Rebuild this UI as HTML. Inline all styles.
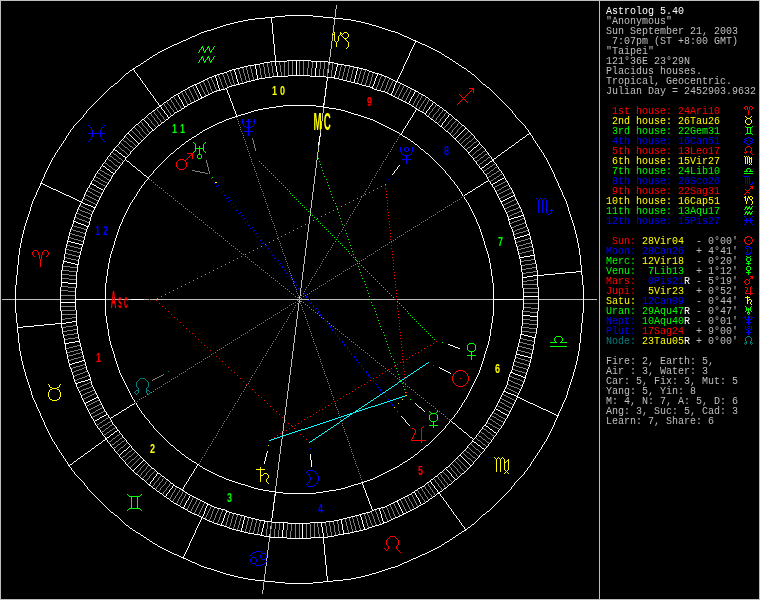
<!DOCTYPE html>
<html><head><meta charset="utf-8"><title>Astrolog 5.40</title>
<style>
html,body{margin:0;padding:0;background:#000;}
body{width:760px;height:600px;overflow:hidden;}
svg{display:block;will-change:transform}
body{position:relative}
pre.t{position:absolute;left:606px;margin:0;padding:0;font-family:"Liberation Mono",monospace;font-size:10px;line-height:10px;height:10px;white-space:pre}
.h{font-family:"Liberation Sans",sans-serif;font-size:12.6px;font-weight:bold;text-anchor:middle}
.g{font-family:"Liberation Sans",sans-serif;font-size:23.3px;font-weight:bold;text-anchor:middle}
</style></head><body>
<svg width="760" height="600" viewBox="0 0 760 600">
<rect width="760" height="600" fill="#000"/>
<g fill="none" stroke-width="1" shape-rendering="crispEdges">
<path stroke="#007f7f" d="M747 336.5h3M746 337.5h1M750 337.5h1M745.5 338v3M751.5 338v3M746.5 341v3M750.5 341v3M745 342.5h1M751 342.5h1M744 343.5h1M752 343.5h1M745 344.5h1M751 344.5h1M168 371.5h1M140 378.5h5M139 379.5h1M145 379.5h1M138 380.5h1M146 380.5h1M137 381.5h1M147 381.5h1M136.5 382v5M148.5 382v5M137 387.5h1M147 387.5h1M138.5 388v5M146.5 388v5M136 390.5h2M147 390.5h2M135 391.5h1M149 391.5h1M134 392.5h1M150 392.5h1M135 393.5h1M137 393.5h1M147 393.5h1M149 393.5h1M136 394.5h1M148 394.5h1"/>
<path stroke="#bfbfbf" d="M0 0.5h760M0.5 1v599M599.5 1v599M759.5 1v599M336.5 5v4M335.5 9v8M334 17.5h1M334.5 19v6M333.5 25v8M332 33.5h1M332.5 35v6M331.5 41v8M330.5 49v8M329.5 57v5M329.5 63v2M328.5 69v4M326 88.5h1M325 96.5h1M324.5 103v2M323.5 108v5M322.5 113v8M321.5 121v8M320.5 129v4M320 136.5h1M319.5 142v3M318.5 146v5M317.5 152v8M316.5 160v8M315.5 168v8M314.5 176v8M313.5 184v8M312.5 192v8M311.5 200v8M310.5 208v5M310.5 214v2M309.5 216v6M309 223.5h1M308.5 224v8M307.5 232v8M306.5 240v8M305.5 248v8M304.5 256v8M303.5 264v8M302.5 272v8M301.5 280v8M300.5 288v8M299.5 296v3M2 299.5h13M16 299.5h44M106 299.5h25M144 299.5h5M150 299.5h149M300 299.5h9M310 299.5h60M371 299.5h24M397 299.5h96M539 299.5h44M584 299.5h13M299.5 300v3M298.5 303v8M297.5 311v8M296.5 319v8M295.5 327v8M294.5 335v8M293.5 343v8M292.5 351v8M291.5 359v8M290.5 367v8M289.5 375v8M288.5 383v8M287.5 391v8M286.5 399v8M285.5 407v8M284.5 415v8M283.5 423v8M282.5 431v5M282.5 437v2M281.5 439v7M280.5 446v8M279.5 454v8M278.5 462v8M277.5 470v8M276.5 478v8M275.5 486v5M274.5 494v2M273 502.5h1M272 510.5h1M270.5 526v3M269.5 534v2M269.5 537v5M268.5 542v8M267.5 550v8M266.5 558v3M266.5 562v4M265.5 566v8M264.5 574v6M264 581.5h1M263.5 582v8M262.5 590v4M1 599.5h598M600 599.5h159"/>
<path stroke="#7f7f7f" d="M288.5 61v14M292.5 61v14M299.5 61v14M303.5 61v14M308.5 61v7M271.5 62v4M279.5 62v3M284.5 62v14M312.5 62v6M320.5 62v7M324.5 62v7M267.5 63v4M328.5 63v6M332.5 63v7M263.5 64v3M259.5 65v3M280.5 65v7M341.5 65v2M250.5 66v3M272.5 66v7M345.5 66v2M349.5 66v3M246.5 67v3M264.5 67v7M268.5 67v6M340.5 67v4M353.5 67v3M242 68.5h1M260.5 68v7M307.5 68v7M311.5 68v8M344.5 68v4M238.5 69v2M243.5 69v4M251.5 69v4M319.5 69v7M323.5 69v7M327.5 69v8M348.5 69v4M361.5 69v2M247.5 70v4M331.5 70v7M352.5 70v4M365.5 70v2M230.5 71v2M239.5 71v3M339.5 71v5M360.5 71v3M281.5 72v4M343.5 72v4M364.5 72v3M369 72.5h1M226 73.5h1M231.5 73v3M244.5 73v3M252.5 73v4M269.5 73v4M273.5 73v3M347.5 73v4M368.5 73v3M373 73.5h1M222 74.5h1M227.5 74v2M240.5 74v4M248.5 74v4M265.5 74v3M351.5 74v4M359.5 74v4M372.5 74v3M218.5 75v2M223.5 75v2M261.5 75v3M363.5 75v4M381.5 75v2M228.5 76v3M232.5 76v4M245.5 76v4M338.5 76v2M342.5 76v3M367.5 76v4M219.5 77v2M224.5 77v3M253.5 77v3M346.5 77v3M371.5 77v4M380.5 77v2M385.5 77v2M211.5 78v2M241.5 78v3M249.5 78v3M350.5 78v3M358.5 78v3M207.5 79v2M220.5 79v3M229.5 79v3M362.5 79v3M379.5 79v3M384.5 79v2M389 79.5h1M212.5 80v2M225.5 80v3M233.5 80v3M246.5 80v2M366.5 80v3M388.5 80v2M203.5 81v2M208.5 81v2M242.5 81v2M357.5 81v2M370.5 81v3M383.5 81v2M392.5 81v2M213.5 82v2M221.5 82v3M230.5 82v2M361.5 82v2M378.5 82v3M387.5 82v3M199 83.5h1M204.5 83v2M209.5 83v3M226.5 83v2M234.5 83v2M365.5 83v2M382.5 83v3M391.5 83v2M200.5 84v2M214.5 84v3M231.5 84v2M369.5 84v2M400 84.5h1M205.5 85v2M222.5 85v2M227.5 85v2M377.5 85v2M386.5 85v3M390.5 85v2M399.5 85v2M192 86.5h1M201.5 86v2M210.5 86v3M381.5 86v2M403.5 86v2M193.5 87v2M206.5 87v3M215.5 87v2M223.5 87v2M376.5 87v2M389.5 87v2M398.5 87v2M188 88.5h1M202.5 88v2M380.5 88v2M385.5 88v2M402.5 88v2M407.5 88v2M189.5 89v2M194.5 89v2M211.5 89v2M216.5 89v2M388.5 89v2M397.5 89v2M411 89.5h1M203.5 90v2M207.5 90v2M384 90.5h1M401.5 90v2M406.5 90v2M410.5 90v2M185.5 91v2M190.5 91v2M195.5 91v2M212 91.5h1M387.5 91v2M396.5 91v2M181 92.5h1M204.5 92v2M208.5 92v2M400.5 92v2M405 92.5h1M409.5 92v2M182.5 93v2M186.5 93v2M191.5 93v2M196.5 93v2M395.5 93v2M404.5 93v2M205.5 94v2M399.5 94v2M408.5 94v2M418.5 94v2M183.5 95v2M187 95.5h1M192.5 95v2M197.5 95v2M394 95.5h1M403.5 95v2M422 95.5h1M188.5 96v2M398.5 96v2M407.5 96v2M417.5 96v2M421.5 96v2M174.5 97v2M184.5 97v2M193.5 97v2M198.5 97v2M402.5 97v2M189.5 98v2M406.5 98v2M416 98.5h1M420.5 98v2M425.5 98v2M170 99.5h1M175 99.5h1M185.5 99v2M194.5 99v2M401 99.5h1M415.5 99v2M171.5 100v2M176.5 100v2M190.5 100v2M405.5 100v2M419 100.5h1M424 100.5h1M428.5 100v2M186.5 101v2M414.5 101v2M418.5 101v2M423.5 101v2M167.5 102v2M172 102.5h1M177 102.5h1M191 102.5h1M427.5 102v2M173.5 103v2M178.5 103v2M187.5 103v2M413.5 103v2M417.5 103v2M422 103.5h1M164.5 104v2M168 104.5h1M421.5 104v2M426 104.5h1M169 105.5h1M174.5 105v2M179 105.5h1M412 105.5h1M416.5 105v2M425.5 105v2M435.5 105v2M165 106.5h1M170.5 106v2M180.5 106v2M420 106.5h1M166.5 107v2M175 107.5h1M415 107.5h1M419.5 107v2M424.5 107v2M434 107.5h1M171 108.5h1M176.5 108v2M181 108.5h1M433 108.5h1M439 108.5h1M157.5 109v2M167 109.5h1M172 109.5h1M418 109.5h1M423.5 109v2M432.5 109v2M438.5 109v2M168.5 110v2M173.5 110v2M177 110.5h1M442.5 110v2M153 111.5h1M158 111.5h1M422 111.5h1M431 111.5h1M437 111.5h1M154.5 112v2M159 112.5h1M169 112.5h1M174 112.5h1M430 112.5h1M436 112.5h1M441 112.5h1M446 112.5h1M160.5 113v2M170.5 113v2M429.5 113v2M435 113.5h1M440 113.5h1M445 113.5h1M151.5 114v2M155 114.5h1M434 114.5h1M439.5 114v2M444.5 114v2M156 115.5h1M161 115.5h1M428 115.5h1M433.5 115v2M152 116.5h1M157.5 116v2M162 116.5h1M438 116.5h1M443 116.5h1M147 117.5h1M153 117.5h1M163.5 117v2M236 117.5h1M432 117.5h1M437 117.5h1M442 117.5h1M148 118.5h1M154.5 118v2M158 118.5h1M431 118.5h1M436.5 118v2M441 118.5h1M452 118.5h1M149 119.5h1M159 119.5h1M164 119.5h1M237 119.5h1M440.5 119v2M451 119.5h1M150 120.5h1M155 120.5h1M160.5 120v2M435 120.5h1M450 120.5h1M456 120.5h1M151.5 121v2M156 121.5h1M238 121.5h1M439 121.5h1M449 121.5h1M455 121.5h1M141 122.5h1M157.5 122v2M161 122.5h1M438 122.5h1M448.5 122v2M454 122.5h1M142.5 123v2M152 123.5h1M238 123.5h1M453 123.5h1M458 123.5h1M153 124.5h1M158 124.5h1M447 124.5h1M452 124.5h1M457.5 124v2M138 125.5h1M143 125.5h1M154 125.5h1M239 125.5h1M446 125.5h1M451.5 125v2M139 126.5h1M144 126.5h1M155 126.5h1M445 126.5h1M456 126.5h1M461 126.5h1M134 127.5h1M140 127.5h1M145 127.5h1M240 127.5h1M444 127.5h1M450 127.5h1M455 127.5h1M460 127.5h1M135 128.5h1M141 128.5h1M146 128.5h1M449 128.5h1M454 128.5h1M459 128.5h1M136 129.5h1M142.5 129v2M147.5 129v2M240 129.5h1M448 129.5h1M453 129.5h1M458 129.5h1M131 130.5h1M137 130.5h1M447 130.5h1M452.5 130v2M457.5 130v2M132 131.5h1M138 131.5h1M143 131.5h1M148 131.5h1M241 131.5h1M468 131.5h1M133 132.5h1M139.5 132v2M144 132.5h1M149 132.5h1M451 132.5h1M456 132.5h1M467 132.5h1M134 133.5h1M145 133.5h1M242 133.5h1M450 133.5h1M455 133.5h1M466 133.5h1M135 134.5h1M140 134.5h1M146 134.5h1M454 134.5h1M465 134.5h1M471 134.5h1M136 135.5h1M141 135.5h1M243 135.5h1M399 135.5h1M453 135.5h1M464 135.5h1M470 135.5h1M125 136.5h1M137 136.5h1M142 136.5h1M463 136.5h1M469 136.5h1M126 137.5h1M138 137.5h1M143 137.5h1M243 137.5h1M398 137.5h1M462 137.5h1M468 137.5h1M127 138.5h1M139 138.5h1M252.5 138v2M461 138.5h1M466 138.5h2M473 138.5h1M128 139.5h1M140 139.5h1M244 139.5h1M397 139.5h1M460 139.5h1M465 139.5h1M472 139.5h1M123 140.5h1M129 140.5h1M141 140.5h1M253.5 140v4M459 140.5h1M464 140.5h1M471 140.5h1M124 141.5h2M130 141.5h2M245 141.5h1M396 141.5h1M458 141.5h1M463 141.5h1M469 141.5h2M476 141.5h1M120 142.5h1M126 142.5h1M132 142.5h1M462 142.5h1M468 142.5h1M474 142.5h2M121 143.5h1M127 143.5h1M133 143.5h1M245 143.5h1M394 143.5h1M461 143.5h1M467 143.5h1M473 143.5h1M122 144.5h1M128 144.5h1M134 144.5h1M254.5 144v4M466 144.5h1M472 144.5h1M123 145.5h1M129 145.5h1M135 145.5h1M246 145.5h1M393 145.5h1M465 145.5h1M471 145.5h1M118 146.5h1M124 146.5h1M130 146.5h2M464 146.5h1M470 146.5h1M119 147.5h1M125 147.5h2M132 147.5h1M247 147.5h1M392 147.5h1M468 147.5h2M481 147.5h1M120 148.5h1M127 148.5h1M133 148.5h1M255.5 148v3M467 148.5h1M480 148.5h1M121 149.5h1M128 149.5h1M247 149.5h1M391 149.5h1M466 149.5h1M479 149.5h1M122 150.5h2M129 150.5h1M477 150.5h2M124 151.5h1M130 151.5h1M248 151.5h1M390 151.5h1M476 151.5h1M483 151.5h2M112 152.5h1M125 152.5h1M475 152.5h1M482 152.5h1M113 153.5h1M126 153.5h1M249 153.5h1M388 153.5h1M474 153.5h1M481 153.5h1M487 153.5h1M114 154.5h2M127 154.5h1M473 154.5h1M479 154.5h2M485 154.5h2M116 155.5h1M249 155.5h1M387 155.5h1M472 155.5h1M478 155.5h1M484 155.5h1M110 156.5h2M117 156.5h1M477 156.5h1M483 156.5h1M112 157.5h1M118 157.5h1M250 157.5h1M386 157.5h1M475 157.5h2M481 157.5h2M488 157.5h2M113 158.5h1M119 158.5h2M474 158.5h1M480 158.5h1M487 158.5h1M108 159.5h1M114 159.5h2M121 159.5h1M251 159.5h1M385 159.5h1M479 159.5h1M486 159.5h1M109 160.5h2M116 160.5h1M122 160.5h1M206.5 160v3M477 160.5h2M484 160.5h2M111 161.5h1M117 161.5h1M251 161.5h1M383 161.5h1M476 161.5h1M483 161.5h1M112 162.5h1M118 162.5h2M482 162.5h1M105 163.5h2M113 163.5h1M120 163.5h1M207.5 163v4M252 163.5h1M382 163.5h1M480 163.5h2M107 164.5h1M114 164.5h1M479 164.5h1M493 164.5h2M108 165.5h1M115 165.5h2M253 165.5h1M381 165.5h1M492 165.5h1M109 166.5h2M117 166.5h1M490 166.5h2M111 167.5h1M118 167.5h1M208.5 167v4M254 167.5h1M380 167.5h1M489 167.5h1M495 167.5h2M112 168.5h1M487 168.5h2M494 168.5h1M113 169.5h2M254 169.5h1M379 169.5h1M486 169.5h1M493 169.5h1M100 170.5h2M115 170.5h1M192 170.5h3M484 170.5h2M491 170.5h2M499 170.5h1M102 171.5h2M195 171.5h5M209.5 171v3M255 171.5h1M377 171.5h1M490 171.5h1M497 171.5h2M104 172.5h1M200 172.5h5M489 172.5h1M496 172.5h1M98 173.5h2M105 173.5h2M205 173.5h3M256 173.5h1M376 173.5h1M487 173.5h2M494 173.5h2M100 174.5h1M107 174.5h2M486 174.5h1M492 174.5h2M500 174.5h2M101 175.5h2M109 175.5h2M256 175.5h1M375 175.5h1M491 175.5h1M499 175.5h1M95 176.5h1M103 176.5h1M111 176.5h1M489 176.5h2M497 176.5h2M96 177.5h2M104 177.5h2M257 177.5h1M374 177.5h1M488 177.5h1M496 177.5h1M98 178.5h2M106 178.5h1M494 178.5h2M100 179.5h1M107 179.5h2M149 179.5h1M258 179.5h1M372 179.5h1M493 179.5h1M94 180.5h2M101 180.5h2M109 180.5h1M151 180.5h1M491 180.5h2M96 181.5h2M103 181.5h2M258 181.5h1M371 181.5h1M490 181.5h1M505 181.5h2M98 182.5h1M105 182.5h2M153 182.5h1M503 182.5h2M99 183.5h2M107 183.5h1M259 183.5h1M370 183.5h1M501 183.5h2M101 184.5h2M155 184.5h1M499 184.5h2M103 185.5h2M157 185.5h1M260 185.5h1M369 185.5h1M497 185.5h2M506 185.5h2M105 186.5h1M495 186.5h2M504 186.5h2M89 187.5h1M159 187.5h1M260 187.5h1M368 187.5h1M494 187.5h1M502 187.5h2M90 188.5h2M161 188.5h1M501 188.5h1M509 188.5h2M92 189.5h2M261 189.5h1M366 189.5h1M499 189.5h2M507 189.5h2M87 190.5h1M94 190.5h2M163 190.5h1M497 190.5h2M505 190.5h2M88 191.5h2M96 191.5h2M262 191.5h1M365 191.5h1M496 191.5h1M503 191.5h2M90 192.5h2M98 192.5h2M165 192.5h1M501 192.5h2M511 192.5h2M92 193.5h1M100 193.5h2M167 193.5h1M263 193.5h1M364 193.5h1M499 193.5h2M509 193.5h2M85 194.5h1M93 194.5h2M498 194.5h1M507 194.5h2M86 195.5h2M95 195.5h2M169 195.5h1M263 195.5h1M363 195.5h1M505 195.5h2M88 196.5h2M97 196.5h2M171 196.5h1M463 196.5h1M503 196.5h2M90 197.5h2M99 197.5h1M264 197.5h1M361 197.5h1M461 197.5h1M501 197.5h2M84 198.5h1M92 198.5h2M173 198.5h1M500 198.5h1M85 199.5h2M94 199.5h2M265 199.5h1M360 199.5h1M459 199.5h1M514 199.5h2M87 200.5h2M96 200.5h2M175 200.5h1M457 200.5h1M512 200.5h2M89 201.5h2M177 201.5h1M265 201.5h1M359 201.5h1M455 201.5h1M510 201.5h2M91 202.5h2M453 202.5h1M508 202.5h2M93 203.5h2M179 203.5h1M266 203.5h1M358 203.5h1M506 203.5h2M516 203.5h2M95 204.5h1M181 204.5h1M451 204.5h1M504 204.5h2M514 204.5h2M80 205.5h1M267 205.5h1M357 205.5h1M449 205.5h1M503 205.5h1M511 205.5h3M81 206.5h2M183 206.5h1M447 206.5h1M509 206.5h2M83 207.5h2M267 207.5h1M355 207.5h1M445 207.5h1M507 207.5h2M518 207.5h2M85 208.5h2M185 208.5h1M505 208.5h2M516 208.5h2M78 209.5h2M87 209.5h2M187 209.5h1M268 209.5h1M354 209.5h1M443 209.5h1M513 209.5h3M80 210.5h2M89 210.5h2M441 210.5h1M510 210.5h3M82 211.5h3M91 211.5h2M189 211.5h1M269 211.5h1M353 211.5h1M439 211.5h1M508 211.5h2M519 211.5h2M85 212.5h3M191 212.5h1M437 212.5h1M507 212.5h1M517 212.5h2M77 213.5h2M88 213.5h2M269 213.5h1M352 213.5h1M514 213.5h3M79 214.5h2M90 214.5h1M193 214.5h1M435 214.5h1M512 214.5h2M81 215.5h2M270 215.5h1M350 215.5h1M433 215.5h1M510 215.5h2M83 216.5h3M195 216.5h1M431 216.5h1M508 216.5h2M75 217.5h2M86 217.5h2M197 217.5h1M271 217.5h1M349 217.5h1M429 217.5h1M77 218.5h2M88 218.5h2M522 218.5h2M79 219.5h3M199 219.5h1M271 219.5h1M348 219.5h1M427 219.5h1M520 219.5h2M82 220.5h3M201 220.5h1M425 220.5h1M517 220.5h3M85 221.5h2M272 221.5h1M347 221.5h1M423 221.5h1M514 221.5h3M87 222.5h2M203 222.5h1M421 222.5h1M512 222.5h2M524 222.5h1M273 223.5h1M346 223.5h1M510 223.5h2M522 223.5h2M205 224.5h1M419 224.5h1M519 224.5h3M73 225.5h1M207 225.5h1M274 225.5h1M344 225.5h1M417 225.5h1M516 225.5h3M74 226.5h3M415 226.5h1M514 226.5h2M525 226.5h1M77 227.5h4M209 227.5h1M274 227.5h1M413 227.5h1M512 227.5h2M523 227.5h2M81 228.5h3M211 228.5h1M520 228.5h3M71 229.5h2M84 229.5h2M275 229.5h1M342 229.5h1M411 229.5h1M517 229.5h3M73 230.5h3M213 230.5h1M409 230.5h1M515 230.5h2M526 230.5h2M76 231.5h4M276 231.5h1M341 231.5h1M407 231.5h1M513 231.5h2M523 231.5h3M80 232.5h3M215 232.5h1M405 232.5h1M519 232.5h4M70 233.5h2M83 233.5h2M217 233.5h1M276 233.5h1M339 233.5h1M516 233.5h3M72 234.5h3M403 234.5h1M514 234.5h2M75 235.5h4M219 235.5h1M277 235.5h1M338 235.5h1M401 235.5h1M79 236.5h3M221 236.5h1M399 236.5h1M69 237.5h2M82 237.5h2M278 237.5h1M337 237.5h1M397 237.5h1M71 238.5h3M223 238.5h1M528 238.5h2M74 239.5h4M278 239.5h1M395 239.5h1M525 239.5h3M78 240.5h3M225 240.5h1M393 240.5h1M521 240.5h4M81 241.5h2M227 241.5h1M279 241.5h1M335 241.5h1M391 241.5h1M518 241.5h3M389 242.5h1M516 242.5h2M530 242.5h1M229 243.5h1M280 243.5h1M333 243.5h1M526 243.5h4M387 244.5h1M523 244.5h3M67 245.5h3M231 245.5h1M280 245.5h1M332 245.5h1M385 245.5h1M519 245.5h4M70 246.5h4M233 246.5h1M383 246.5h1M517 246.5h2M529 246.5h3M74 247.5h4M281 247.5h1M331 247.5h1M381 247.5h1M525 247.5h4M78 248.5h3M235 248.5h1M521 248.5h4M66 249.5h3M237 249.5h1M282 249.5h1M330 249.5h1M379 249.5h1M518 249.5h3M69 250.5h4M377 250.5h1M530 250.5h3M73 251.5h4M239 251.5h1M282 251.5h1M328 251.5h1M375 251.5h1M526 251.5h4M77 252.5h3M522 252.5h4M66 253.5h2M241 253.5h1M283 253.5h1M327 253.5h1M373 253.5h1M519 253.5h3M68 254.5h4M243 254.5h1M371 254.5h1M72 255.5h4M284 255.5h1M326 255.5h1M369 255.5h1M76 256.5h3M245 256.5h1M367 256.5h1M65 257.5h2M247 257.5h1M285 257.5h1M325 257.5h1M67 258.5h4M365 258.5h1M71 259.5h5M249 259.5h1M285 259.5h1M323 259.5h1M363 259.5h1M531 259.5h3M76 260.5h2M361 260.5h1M524 260.5h7M251 261.5h1M286 261.5h1M322 261.5h1M359 261.5h1M521 261.5h3M253 262.5h1M287 263.5h1M321 263.5h1M532 263.5h3M255 264.5h1M355 264.5h1M525 264.5h7M257 265.5h1M287 265.5h1M320 265.5h1M353 265.5h1M522 265.5h3M63 266.5h7M351 266.5h1M70 267.5h7M259 267.5h1M288 267.5h1M319 267.5h1M532 267.5h4M349 268.5h1M526 268.5h6M261 269.5h1M289 269.5h1M317 269.5h1M347 269.5h1M522 269.5h4M62 270.5h7M263 270.5h1M345 270.5h1M69 271.5h8M289 271.5h1M316 271.5h1M343 271.5h1M533 271.5h4M265 272.5h1M526 272.5h7M267 273.5h1M290 273.5h1M315 273.5h1M341 273.5h1M523 273.5h3M62 274.5h7M339 274.5h1M69 275.5h7M269 275.5h1M291 275.5h1M314 275.5h1M337 275.5h1M335 276.5h1M271 277.5h1M291 277.5h1M312 277.5h1M62 278.5h7M273 278.5h1M333 278.5h1M69 279.5h7M292 279.5h1M311 279.5h1M331 279.5h1M534 279.5h3M275 280.5h1M329 280.5h1M527 280.5h7M277 281.5h1M293 281.5h1M310 281.5h1M327 281.5h1M523 281.5h4M279 283.5h1M293 283.5h1M309 283.5h1M325 283.5h1M323 284.5h1M523 284.5h14M281 285.5h1M294 285.5h1M308 285.5h1M321 285.5h1M62 286.5h6M283 286.5h1M319 286.5h1M68 287.5h8M295 287.5h1M306 287.5h1M285 288.5h1M317 288.5h1M524 288.5h14M287 289.5h1M296 289.5h1M305 289.5h1M315 289.5h1M61 290.5h7M313 290.5h1M68 291.5h7M289 291.5h1M296 291.5h1M304 291.5h1M311 291.5h1M524 292.5h14M291 293.5h1M297 293.5h1M303 293.5h1M309 293.5h1M293 294.5h1M307 294.5h1M61 295.5h14M298 295.5h1M301 295.5h1M305 295.5h1M295 296.5h1M303 296.5h1M297 297.5h2M300 297.5h1M301 298.5h1M61 299.5h14M299 299.5h1M524 299.5h14M297 300.5h1M298 301.5h1M300 301.5h2M295 302.5h1M303 302.5h1M293 303.5h1M297 303.5h1M300 303.5h1M524 303.5h14M291 304.5h1M305 304.5h1M289 305.5h1M295 305.5h1M301 305.5h1M307 305.5h1M61 306.5h14M287 307.5h1M294 307.5h1M302 307.5h1M309 307.5h1M524 307.5h7M285 308.5h1M531 308.5h7M283 309.5h1M293 309.5h1M302 309.5h1M311 309.5h1M61 310.5h14M281 310.5h1M313 310.5h1M292 311.5h1M303 311.5h1M523 311.5h7M279 312.5h1M315 312.5h1M530 312.5h7M277 313.5h1M290 313.5h1M304 313.5h1M317 313.5h1M62 314.5h14M275 314.5h1M273 315.5h1M289 315.5h1M305 315.5h1M319 315.5h1M72 317.5h4M271 317.5h1M288 317.5h1M305 317.5h1M321 317.5h1M65 318.5h7M269 318.5h1M323 318.5h1M62 319.5h3M267 319.5h1M287 319.5h1M306 319.5h1M523 319.5h7M265 320.5h1M530 320.5h7M286 321.5h1M307 321.5h1M327 321.5h1M263 322.5h1M261 323.5h1M284 323.5h1M307 323.5h1M329 323.5h1M523 323.5h6M259 324.5h1M529 324.5h8M73 325.5h3M257 325.5h1M283 325.5h1M308 325.5h1M331 325.5h1M66 326.5h7M333 326.5h1M62 327.5h4M255 327.5h1M282 327.5h1M309 327.5h1M522 327.5h7M253 328.5h1M335 328.5h1M529 328.5h7M73 329.5h4M251 329.5h1M281 329.5h1M309 329.5h1M337 329.5h1M67 330.5h6M249 330.5h1M63 331.5h4M279 331.5h1M310 331.5h1M339 331.5h1M522 331.5h7M247 332.5h1M529 332.5h7M74 333.5h3M245 333.5h1M278 333.5h1M311 333.5h1M341 333.5h1M67 334.5h7M243 334.5h1M343 334.5h1M64 335.5h3M241 335.5h1M277 335.5h1M311 335.5h1M345 336.5h1M75 337.5h3M239 337.5h1M276 337.5h1M312 337.5h1M347 337.5h1M68 338.5h7M237 338.5h1M521 338.5h2M65 339.5h3M235 339.5h1M275 339.5h1M313 339.5h1M349 339.5h1M523 339.5h4M233 340.5h1M527 340.5h5M273 341.5h1M313 341.5h1M351 341.5h1M532 341.5h2M231 342.5h1M353 342.5h1M520 342.5h3M229 343.5h1M272 343.5h1M314 343.5h1M523 343.5h4M227 344.5h1M355 344.5h1M527 344.5h4M77 345.5h3M225 345.5h1M271 345.5h1M315 345.5h1M357 345.5h1M531 345.5h2M73 346.5h4M519 346.5h3M69 347.5h4M223 347.5h1M270 347.5h1M316 347.5h1M359 347.5h1M522 347.5h4M66 348.5h3M221 348.5h1M526 348.5h4M78 349.5h3M219 349.5h1M268 349.5h1M316 349.5h1M361 349.5h1M530 349.5h3M74 350.5h4M217 350.5h1M363 350.5h1M518 350.5h3M70 351.5h4M267 351.5h1M317 351.5h1M521 351.5h4M67 352.5h3M80 352.5h2M215 352.5h1M365 352.5h1M525 352.5h4M76 353.5h4M266 353.5h1M318 353.5h1M367 353.5h1M529 353.5h3M73 354.5h3M211 354.5h1M69 355.5h4M265 355.5h1M318 355.5h1M369 355.5h1M68 356.5h1M81 356.5h2M209 356.5h1M78 357.5h3M207 357.5h1M263 357.5h1M319 357.5h1M371 357.5h1M516 357.5h2M74 358.5h4M205 358.5h1M373 358.5h1M518 358.5h3M71 359.5h3M203 359.5h1M262 359.5h1M320 359.5h1M521 359.5h4M69 360.5h2M375 360.5h1M525 360.5h3M201 361.5h1M261 361.5h1M320 361.5h1M515 361.5h2M528 361.5h2M199 362.5h1M377 362.5h1M517 362.5h3M197 363.5h1M260 363.5h1M321 363.5h1M379 363.5h1M520 363.5h4M83 364.5h2M195 364.5h1M524 364.5h3M80 365.5h3M259 365.5h1M322 365.5h1M381 365.5h1M514 365.5h2M527 365.5h2M76 366.5h4M193 366.5h1M383 366.5h1M516 366.5h3M73 367.5h3M84 367.5h2M191 367.5h1M257 367.5h1M322 367.5h1M519 367.5h4M71 368.5h2M82 368.5h2M189 368.5h1M385 368.5h1M523 368.5h3M79 369.5h3M187 369.5h1M256 369.5h1M323 369.5h1M513 369.5h2M526 369.5h1M76 370.5h3M387 370.5h1M515 370.5h3M74 371.5h2M85 371.5h2M185 371.5h1M255 371.5h1M324 371.5h1M389 371.5h1M518 371.5h4M73 372.5h1M83 372.5h2M183 372.5h1M522 372.5h3M80 373.5h3M181 373.5h1M254 373.5h1M324 373.5h1M391 373.5h1M525 373.5h1M77 374.5h3M163 374.5h1M179 374.5h1M393 374.5h1M75 375.5h2M87 375.5h2M161 375.5h2M252 375.5h1M325 375.5h1M74 376.5h1M85 376.5h2M159 376.5h2M177 376.5h1M395 376.5h1M510 376.5h2M82 377.5h3M157 377.5h2M175 377.5h1M251 377.5h1M326 377.5h1M512 377.5h2M79 378.5h3M155 378.5h2M173 378.5h1M397 378.5h1M514 378.5h3M77 379.5h2M153 379.5h2M171 379.5h1M250 379.5h1M327 379.5h1M399 379.5h1M517 379.5h3M75 380.5h2M152 380.5h1M509 380.5h2M520 380.5h2M169 381.5h1M249 381.5h1M327 381.5h1M401 381.5h1M511 381.5h2M522 381.5h2M89 382.5h2M167 382.5h1M403 382.5h1M513 382.5h2M87 383.5h2M165 383.5h1M248 383.5h1M328 383.5h1M515 383.5h3M84 384.5h3M163 384.5h1M405 384.5h1M508 384.5h1M518 384.5h2M82 385.5h2M246 385.5h1M329 385.5h1M509 385.5h2M520 385.5h2M80 386.5h2M91 386.5h1M161 386.5h1M407 386.5h1M511 386.5h3M78 387.5h2M89 387.5h2M159 387.5h1M245 387.5h1M329 387.5h1M409 387.5h1M506 387.5h1M514 387.5h3M86 388.5h3M157 388.5h1M507 388.5h2M517 388.5h2M83 389.5h3M155 389.5h1M244 389.5h1M330 389.5h1M411 389.5h1M509 389.5h2M519 389.5h1M81 390.5h2M92 390.5h2M413 390.5h1M511 390.5h2M80 391.5h1M90 391.5h2M153 391.5h1M243 391.5h1M331 391.5h1M513 391.5h2M87 392.5h3M151 392.5h1M415 392.5h1M515 392.5h2M85 393.5h2M94 393.5h2M241 393.5h1M331 393.5h1M517 393.5h1M83 394.5h2M92 394.5h2M147 394.5h1M417 394.5h1M503 394.5h1M82 395.5h1M90 395.5h2M240 395.5h1M332 395.5h1M419 395.5h1M504 395.5h2M88 396.5h2M145 396.5h1M506 396.5h2M86 397.5h2M143 397.5h1M239 397.5h1M333 397.5h1M421 397.5h1M508 397.5h2M84 398.5h2M141 398.5h1M423 398.5h1M501 398.5h1M510 398.5h2M83 399.5h1M139 399.5h1M238 399.5h1M333 399.5h1M502 399.5h2M512 399.5h2M97 400.5h2M425 400.5h1M504 400.5h2M514 400.5h1M95 401.5h2M137 401.5h1M237 401.5h1M499 401.5h1M506 401.5h2M93 402.5h2M135 402.5h1M427 402.5h1M500 402.5h2M508 402.5h2M91 403.5h2M235 403.5h1M335 403.5h1M429 403.5h1M502 403.5h2M510 403.5h2M89 404.5h2M99 404.5h2M504 404.5h1M512 404.5h1M87 405.5h2M97 405.5h2M234 405.5h1M335 405.5h1M431 405.5h1M497 405.5h1M505 405.5h2M95 406.5h2M433 406.5h1M498 406.5h2M507 406.5h2M93 407.5h2M102 407.5h1M233 407.5h1M336 407.5h1M500 407.5h2M509 407.5h2M91 408.5h2M100 408.5h2M435 408.5h1M502 408.5h2M89 409.5h2M98 409.5h2M232 409.5h1M337 409.5h1M504 409.5h2M96 410.5h2M437 410.5h1M506 410.5h2M95 411.5h1M103 411.5h2M230 411.5h1M338 411.5h1M439 411.5h1M508 411.5h2M93 412.5h2M101 412.5h2M493 412.5h1M91 413.5h2M99 413.5h2M229 413.5h1M338 413.5h1M441 413.5h1M494 413.5h2M97 414.5h2M443 414.5h1M496 414.5h2M95 415.5h2M228 415.5h1M339 415.5h1M491 415.5h1M498 415.5h1M93 416.5h2M445 416.5h1M492 416.5h2M499 416.5h2M92 417.5h1M108 417.5h1M227 417.5h1M494 417.5h2M501 417.5h2M106 418.5h2M447 418.5h1M489 418.5h1M496 418.5h1M503 418.5h2M105 419.5h1M226 419.5h1M340 419.5h1M449 419.5h1M490 419.5h2M497 419.5h2M103 420.5h2M492 420.5h1M499 420.5h2M102 421.5h1M110 421.5h1M224 421.5h1M341 421.5h1M493 421.5h2M501 421.5h2M100 422.5h2M108 422.5h2M487 422.5h1M495 422.5h1M503 422.5h1M99 423.5h1M107 423.5h1M223 423.5h1M342 423.5h1M488 423.5h2M496 423.5h2M97 424.5h2M105 424.5h2M112 424.5h1M490 424.5h2M498 424.5h1M103 425.5h2M110 425.5h2M222 425.5h1M342 425.5h1M492 425.5h1M499 425.5h2M102 426.5h1M109 426.5h1M493 426.5h2M100 427.5h2M108 427.5h1M115 427.5h1M221 427.5h1M343 427.5h1M495 427.5h2M99 428.5h1M106 428.5h2M113 428.5h2M483 428.5h1M497 428.5h2M105 429.5h1M112 429.5h1M219 429.5h1M344 429.5h1M484 429.5h2M104 430.5h1M110 430.5h2M486 430.5h1M102 431.5h2M109 431.5h1M218 431.5h1M344 431.5h1M480 431.5h1M487 431.5h1M107 432.5h2M481 432.5h1M488 432.5h2M106 433.5h1M217 433.5h1M345 433.5h1M482 433.5h2M490 433.5h1M104 434.5h2M119 434.5h1M484 434.5h1M491 434.5h1M117 435.5h2M216 435.5h1M346 435.5h1M478 435.5h1M485 435.5h1M492 435.5h2M116 436.5h1M479 436.5h2M486 436.5h1M115 437.5h1M122 437.5h1M215 437.5h1M347 437.5h1M481 437.5h1M487 437.5h1M113 438.5h2M120 438.5h2M476 438.5h1M482 438.5h1M488 438.5h2M112 439.5h1M119 439.5h1M213 439.5h1M347 439.5h1M477 439.5h1M483 439.5h2M490 439.5h1M111 440.5h1M118 440.5h1M124 440.5h1M478 440.5h2M485 440.5h1M109 441.5h2M116 441.5h2M122 441.5h2M212 441.5h1M348 441.5h1M480 441.5h1M486 441.5h1M115 442.5h1M121 442.5h1M481 442.5h1M487 442.5h2M114 443.5h1M120 443.5h1M126 443.5h1M211 443.5h1M349 443.5h1M482 443.5h1M112 444.5h2M118 444.5h2M125 444.5h1M471 444.5h1M483 444.5h2M111 445.5h1M117 445.5h1M124 445.5h1M210 445.5h1M349 445.5h1M472 445.5h1M485 445.5h1M116 446.5h1M123 446.5h1M473 446.5h1M486 446.5h1M114 447.5h2M121 447.5h2M208 447.5h1M350 447.5h1M468 447.5h1M474 447.5h1M120 448.5h1M469 448.5h1M475 448.5h1M119 449.5h1M132 449.5h1M207 449.5h1M351 449.5h1M470 449.5h1M476 449.5h2M118 450.5h1M131 450.5h1M465 450.5h1M471 450.5h1M478 450.5h1M117 451.5h1M129 451.5h2M206 451.5h1M351 451.5h1M466 451.5h1M472 451.5h1M479 451.5h1M128 452.5h1M134 452.5h1M467 452.5h2M473 452.5h2M480 452.5h1M127 453.5h1M133 453.5h1M205 453.5h1M352 453.5h1M463 453.5h1M469 453.5h1M475 453.5h1M126 454.5h1M132 454.5h1M464 454.5h1M470 454.5h1M476 454.5h1M125 455.5h1M131 455.5h1M137 455.5h1M204 455.5h1M353 455.5h1M465 455.5h1M471 455.5h1M477 455.5h1M123 456.5h2M129 456.5h2M136 456.5h1M466 456.5h1M472 456.5h1M478 456.5h1M122 457.5h1M128 457.5h1M135 457.5h1M140 457.5h1M202 457.5h1M353 457.5h1M467 457.5h1M473 457.5h2M127 458.5h1M134 458.5h1M139 458.5h1M457 458.5h1M468 458.5h2M475 458.5h1M126 459.5h1M132 459.5h2M138 459.5h1M201 459.5h1M354 459.5h1M458 459.5h1M470 459.5h1M125 460.5h1M131 460.5h1M137 460.5h1M459 460.5h1M471 460.5h1M130 461.5h1M136 461.5h1M200 461.5h1M355 461.5h1M455 461.5h1M460 461.5h1M472 461.5h1M129 462.5h1M135 462.5h1M456 462.5h1M461 462.5h1M128 463.5h1M134 463.5h1M145 463.5h1M199 463.5h1M355 463.5h1M457 463.5h1M462 463.5h1M127 464.5h1M133 464.5h1M144 464.5h1M452 464.5h1M458 464.5h1M463 464.5h1M132 465.5h1M143 465.5h1M148 465.5h1M356 465.5h1M453 465.5h1M459 465.5h1M464 465.5h1M131 466.5h1M142 466.5h1M147 466.5h1M449 466.5h1M454 466.5h1M460.5 466v2M465 466.5h1M130 467.5h1M141 467.5h1M146.5 467v2M357 467.5h1M450 467.5h1M455 467.5h1M466 467.5h1M140.5 468v2M151 468.5h1M451.5 468v2M456 468.5h1M461 468.5h1M467 468.5h1M145 469.5h1M150 469.5h1M358 469.5h1M457.5 469v2M462 469.5h1M139 470.5h1M144 470.5h1M149 470.5h1M452 470.5h1M463 470.5h1M138 471.5h1M143 471.5h1M148 471.5h1M154 471.5h1M358 471.5h1M453 471.5h1M458 471.5h1M464 471.5h1M137 472.5h1M142 472.5h1M147 472.5h1M153 472.5h1M443 472.5h1M454 472.5h1M459 472.5h1M136 473.5h1M141.5 473v2M146.5 473v2M152 473.5h1M359 473.5h1M444 473.5h1M455 473.5h1M460 473.5h1M151 474.5h1M440 474.5h1M445 474.5h1M456.5 474v2M140 475.5h1M145 475.5h1M150 475.5h1M360 475.5h1M441.5 475v2M446 475.5h1M144 476.5h1M149.5 476v2M160 476.5h1M437 476.5h1M447 476.5h1M457 476.5h1M143 477.5h1M159 477.5h1M360 477.5h1M438.5 477v2M442 477.5h1M448.5 477v2M142 478.5h1M148 478.5h1M158.5 478v2M163 478.5h1M443 478.5h1M147 479.5h1M162.5 479v2M361 479.5h1M434 479.5h1M439 479.5h1M444.5 479v2M449 479.5h1M146 480.5h1M157 480.5h1M167 480.5h1M435.5 480v2M440 480.5h1M450 480.5h1M156 481.5h1M161 481.5h1M166 481.5h1M362 481.5h1M441.5 481v2M445 481.5h1M451 481.5h1M155 482.5h1M160 482.5h1M165.5 482v2M436 482.5h1M446 482.5h1M154.5 483v2M159.5 483v2M170 483.5h1M427 483.5h1M437 483.5h1M442 483.5h1M447.5 483v2M164 484.5h1M169.5 484v2M428.5 484v2M438.5 484v2M443 484.5h1M153 485.5h1M158 485.5h1M163 485.5h1M444.5 485v2M152 486.5h1M157 486.5h1M162 486.5h1M168 486.5h1M424 486.5h1M429 486.5h1M439 486.5h1M156.5 487v2M161 487.5h1M167 487.5h1M176 487.5h1M425.5 487v2M430.5 487v2M440 487.5h1M445 487.5h1M160.5 488v2M166.5 488v2M175.5 488v2M421 488.5h1M441.5 488v2M180 489.5h1M422.5 489v2M426 489.5h1M431 489.5h1M159 490.5h1M165 490.5h1M174.5 490v2M179.5 490v2M417 490.5h1M427 490.5h1M432.5 490v2M164 491.5h1M183 491.5h1M418.5 491v2M423 491.5h1M428.5 491v2M163.5 492v2M173 492.5h1M178 492.5h1M182.5 492v2M424.5 492v2M433 492.5h1M172.5 493v2M177.5 493v2M186 493.5h1M419 493.5h1M429 493.5h1M434.5 493v2M181.5 494v2M185.5 494v2M411 494.5h1M420.5 494v2M425.5 494v2M430 494.5h1M171.5 495v2M176 495.5h1M412.5 495v2M431.5 495v2M175.5 496v2M180 496.5h1M184.5 496v2M407 496.5h1M421 496.5h1M426 496.5h1M170.5 497v2M179.5 497v2M193 497.5h1M408.5 497v2M413.5 497v2M422.5 497v2M427.5 497v2M174 498.5h1M183 498.5h1M192.5 498v2M404 498.5h1M173.5 499v2M178.5 499v2M182.5 499v2M197 499.5h1M405.5 499v2M409.5 499v2M414.5 499v2M423 499.5h1M428 499.5h1M191.5 500v2M196.5 500v2M400 500.5h1M424.5 500v2M177.5 501v2M181.5 501v2M200 501.5h1M401.5 501v2M406.5 501v2M410 501.5h1M415.5 501v2M190.5 502v2M195.5 502v2M199.5 502v2M411.5 502v2M176 503.5h1M180.5 503v2M204 503.5h1M393 503.5h1M402.5 503v2M407.5 503v2M416.5 503v2M189.5 504v2M194 504.5h1M198.5 504v2M203.5 504v2M394.5 504v2M412.5 504v2M193.5 505v2M390.5 505v2M403.5 505v2M408.5 505v2M417.5 505v2M188.5 506v2M197.5 506v2M202.5 506v2M211 506.5h1M395.5 506v2M413.5 506v2M192.5 507v2M210.5 507v2M386 507.5h1M391.5 507v2M404.5 507v2M409.5 507v2M187.5 508v2M196.5 508v2M201.5 508v2M214 508.5h1M382.5 508v2M387.5 508v2M396.5 508v2M191.5 509v2M209.5 509v2M213.5 509v2M218.5 509v2M392.5 509v2M405.5 509v2M410 509.5h1M195.5 510v2M200.5 510v2M222.5 510v2M375.5 510v2M383.5 510v2M388.5 510v3M397.5 510v2M190 511.5h1M208.5 511v2M212.5 511v3M217.5 511v2M393.5 511v3M406 511.5h1M194.5 512v2M199.5 512v2M221.5 512v2M371.5 512v2M376.5 512v2M384.5 512v2M398.5 512v2M207.5 513v2M216.5 513v2M229.5 513v2M367.5 513v2M389.5 513v3M198 514.5h1M211.5 514v3M220.5 514v3M233.5 514v2M364.5 514v2M372.5 514v2M377.5 514v3M385.5 514v3M394.5 514v2M399.5 514v2M206.5 515v2M215.5 515v3M228.5 515v3M237.5 515v2M368.5 515v2M232.5 516v3M241.5 516v2M356.5 516v2M365.5 516v3M373.5 516v3M390.5 516v2M395 516.5h1M205.5 517v2M210.5 517v2M219.5 517v3M236.5 517v3M352.5 517v2M369.5 517v3M378.5 517v3M386.5 517v2M214.5 518v2M227.5 518v4M240.5 518v3M248.5 518v3M349.5 518v3M357.5 518v3M391 518.5h1M209.5 519v2M231.5 519v4M252.5 519v3M345.5 519v3M353.5 519v4M366.5 519v4M374.5 519v3M387.5 519v2M213.5 520v2M218.5 520v2M235.5 520v4M256.5 520v3M370.5 520v3M379.5 520v2M239.5 521v4M247.5 521v4M260.5 521v2M337.5 521v3M350.5 521v4M358.5 521v4M217.5 522v2M226.5 522v3M251.5 522v4M267.5 522v7M271.5 522v7M329.5 522v4M333.5 522v3M346.5 522v4M375.5 522v2M380.5 522v2M230.5 523v3M255.5 523v4M259.5 523v4M275.5 523v6M279.5 523v7M287.5 523v7M314.5 523v14M317.5 523v4M325.5 523v3M354.5 523v3M367.5 523v3M371.5 523v2M234.5 524v3M291.5 524v7M295.5 524v14M299.5 524v14M306.5 524v14M310.5 524v14M338.5 524v7M376 524.5h1M225 525.5h1M238.5 525v3M246.5 525v4M334.5 525v7M351.5 525v4M359.5 525v3M372 525.5h1M229.5 526v2M250.5 526v4M326.5 526v7M330.5 526v6M347.5 526v4M355.5 526v4M368.5 526v2M233.5 527v2M254.5 527v4M258.5 527v5M318.5 527v7M237.5 528v2M360.5 528v2M245.5 529v3M266.5 529v7M270.5 529v8M274.5 529v8M352.5 529v3M249.5 530v3M278.5 530v7M286.5 530v7M348.5 530v3M356 530.5h1M253.5 531v2M290.5 531v7M339.5 531v3M257.5 532v2M331.5 532v4M335.5 532v3M327.5 533v4M319.5 534v3"/>
<path stroke="#ff0000" d="M469 88.5h5M472 89.5h2M471 90.5h1M473.5 90v3M470 91.5h1M469 92.5h1M468 93.5h1M459 94.5h1M467 94.5h1M460 95.5h1M466 95.5h1M461 96.5h1M465 96.5h1M462 97.5h1M464 97.5h1M463 98.5h1M462 99.5h1M464 99.5h1M461 100.5h1M465 100.5h1M460 101.5h1M466 101.5h1M459 102.5h1M467 102.5h1M458 103.5h1M457 104.5h1M745 106.5h2M750 106.5h2M744.5 107v2M747.5 107v3M749.5 107v3M752.5 107v2M745 109.5h1M751 109.5h1M748.5 110v5M747 146.5h3M746 147.5h1M750 147.5h1M745.5 148v3M751.5 148v3M746.5 151v2M750.5 151v2M744 152.5h1M187 153.5h6M745 153.5h1M751 153.5h1M191 154.5h2M752 154.5h1M190 155.5h1M192.5 155v4M189 156.5h1M188 157.5h1M187 158.5h1M179 159.5h5M186 159.5h1M178 160.5h1M184 160.5h2M177 161.5h1M185 161.5h1M176.5 162v5M186.5 162v5M177 167.5h1M185 167.5h1M178 168.5h1M184 168.5h1M179 169.5h5M211 178.5h1M385 185.5h1M750 186.5h3M751 187.5h2M385 188.5h1M750 188.5h1M752 188.5h1M745 189.5h1M749 189.5h1M746 190.5h1M748 190.5h1M386 191.5h1M747 191.5h1M746 192.5h1M748 192.5h1M745 193.5h1M749 193.5h1M386 194.5h1M744 194.5h1M386 197.5h1M387 200.5h1M387 203.5h1M387 206.5h1M387 209.5h1M388 212.5h1M388 215.5h1M388 218.5h1M389 221.5h1M389 224.5h1M389 227.5h1M390 230.5h1M390 233.5h1M390 236.5h1M747 236.5h3M745 237.5h2M750 237.5h2M745 238.5h1M751 238.5h1M390 239.5h1M744.5 239v3M752.5 239v3M748 240.5h1M391 242.5h1M745.5 242v2M751.5 242v2M746 243.5h1M750 243.5h1M747 244.5h3M391 245.5h1M391 248.5h1M34 250.5h3M44 250.5h3M33 251.5h1M37 251.5h1M43 251.5h1M47 251.5h1M392 251.5h1M32.5 252v3M38.5 252v3M42.5 252v3M48.5 252v3M392 254.5h1M33 255.5h1M39.5 255v4M41.5 255v4M47 255.5h1M34 256.5h1M46 256.5h1M392 257.5h1M40.5 259v8M393 260.5h1M393 263.5h1M393 266.5h1M393 269.5h1M394 272.5h1M394 275.5h1M750 276.5h3M751 277.5h2M394 278.5h1M750 278.5h1M752 278.5h1M746 279.5h2M749 279.5h1M745 280.5h1M748 280.5h1M395 281.5h1M744.5 281v2M749.5 281v2M745 283.5h1M748 283.5h1M395 284.5h1M746 284.5h2M751 286.5h1M395 287.5h1M745 287.5h2M750.5 287v8M747.5 288v2M396 290.5h1M746.5 290v2M745.5 292v2M396 293.5h1M746 293.5h4M751 293.5h2M396 296.5h1M149 299.5h1M396 299.5h1M156 300.5h1M397 302.5h1M159 303.5h1M397 305.5h1M162 306.5h1M165 308.5h1M397 308.5h1M168 311.5h1M398 311.5h1M171 314.5h1M398 314.5h1M174 317.5h1M398 317.5h1M177 319.5h1M399 320.5h1M180 322.5h1M399 323.5h1M183 325.5h1M399 326.5h1M186 328.5h1M399 329.5h1M189 331.5h1M400 332.5h1M192 333.5h1M400 335.5h1M195 336.5h1M400 338.5h1M198 339.5h1M401 341.5h1M436 341.5h1M201 342.5h1M433 343.5h1M401 344.5h1M204 345.5h1M430 345.5h1M427 346.5h1M207 347.5h1M401 347.5h1M424 348.5h1M210 350.5h1M402 350.5h1M421 350.5h1M418 352.5h1M213 353.5h1M402 353.5h1M415 353.5h1M412 355.5h1M216 356.5h1M402 356.5h1M409 357.5h1M219 358.5h1M402 359.5h1M406 359.5h1M222 361.5h1M403.5 361v2M400 362.5h1M225 364.5h1M397 364.5h1M403 365.5h1M433 365.5h1M394 366.5h1M228 367.5h1M391 368.5h1M403 368.5h1M388 369.5h1M231 370.5h1M458 370.5h5M385 371.5h1M404 371.5h1M456 371.5h2M463 371.5h2M234 372.5h1M455 372.5h1M465 372.5h1M382 373.5h1M454 373.5h1M466 373.5h1M404 374.5h1M453.5 374v2M467.5 374v2M237 375.5h1M379 375.5h1M452.5 376v5M468.5 376v5M376 377.5h1M404 377.5h1M240 378.5h1M373 378.5h1M460 378.5h1M370 380.5h1M405 380.5h1M243 381.5h1M453.5 381v2M467.5 381v2M367 382.5h1M405 383.5h1M454 383.5h1M466 383.5h1M246 384.5h1M364 384.5h1M455 384.5h1M465 384.5h1M361 385.5h1M456 385.5h2M463 385.5h2M249 386.5h1M405 386.5h1M458 386.5h5M358 387.5h1M252 389.5h1M355 389.5h1M405 389.5h1M352 391.5h1M255 392.5h1M406 392.5h1M349 393.5h1M346 394.5h1M258 395.5h1M343 396.5h1M261 397.5h1M340 398.5h1M264 400.5h1M337 400.5h1M334 401.5h1M267 403.5h1M331 403.5h1M328 405.5h1M270 406.5h1M325 407.5h1M273 409.5h1M322 409.5h1M319 410.5h1M276 411.5h1M397 411.5h1M316 412.5h1M279 414.5h1M313 414.5h1M310 416.5h1M282 417.5h1M307 417.5h1M304 419.5h1M285 420.5h1M301 421.5h1M288 423.5h1M298 423.5h1M291 425.5h1M295 425.5h1M292 426.5h1M423 426.5h1M422 427.5h1M289 428.5h1M294 428.5h1M412 428.5h2M421.5 428v15M414 429.5h1M286 430.5h1M415.5 430v3M283 432.5h1M280 433.5h1M414.5 433v2M300 434.5h1M277 435.5h1M413.5 435v2M303 436.5h1M274 437.5h1M412.5 437v2M306 439.5h1M411.5 439v2M412 440.5h9M422 440.5h4M390 536.5h5M389 537.5h1M395 537.5h1M388 538.5h1M396 538.5h1M387 539.5h1M397 539.5h1M386.5 540v5M398.5 540v5M387 545.5h1M397 545.5h1M388.5 546v3M396.5 546v3M384 548.5h1M385 549.5h1M387 549.5h1M397 549.5h1M386 550.5h1M398 550.5h1M399 551.5h1M400 552.5h1"/>
<path stroke="#00ff00" d="M202.5 46v2M208.5 46v2M214 46.5h1M201.5 47v2M207.5 47v2M213.5 47v2M203.5 48v3M209.5 48v3M200 49.5h1M206 49.5h1M212 49.5h1M199.5 50v2M205.5 50v2M211.5 50v2M204.5 51v2M210.5 51v2M198 52.5h1M202.5 56v2M208.5 56v2M214 56.5h1M201.5 57v2M207.5 57v2M213.5 57v2M203.5 58v3M209.5 58v3M200 59.5h1M206 59.5h1M212 59.5h1M199.5 60v2M205.5 60v2M211.5 60v2M204.5 61v2M210.5 61v2M198 62.5h1M745 126.5h1M752 126.5h1M746 127.5h6M747.5 128v6M750.5 128v6M746 133.5h1M748 133.5h2M751 133.5h1M745 134.5h1M752 134.5h1M193 142.5h1M205 142.5h1M194 143.5h1M204 143.5h1M195.5 144v7M203.5 144v7M199.5 146v9M196 148.5h3M200 148.5h3M194 151.5h1M204 151.5h1M193 152.5h1M205 152.5h1M198 154.5h1M200 154.5h1M197.5 155v3M201.5 155v3M198 158.5h3M318 158.5h1M259 161.5h1M319 161.5h1M261 163.5h1M320 164.5h1M263 165.5h1M265 167.5h1M321 167.5h1M747 168.5h3M267 169.5h1M746.5 169v3M750.5 169v3M322 170.5h1M269 171.5h1M744 171.5h2M747 171.5h1M749 171.5h1M751 171.5h2M271 173.5h1M323 173.5h1M744 173.5h9M273 175.5h1M324 176.5h1M212 177.5h1M275 177.5h1M277 179.5h1M326 179.5h1M279 181.5h1M327 182.5h1M281 183.5h1M385 184.5h1M283 185.5h1M328 185.5h1M381 186.5h1M285 187.5h1M329 188.5h1M377 188.5h1M287 189.5h1M373 190.5h1M289 191.5h1M330 191.5h1M369 192.5h1M290 193.5h1M331 194.5h1M365 194.5h1M292 195.5h1M361 196.5h1M294 197.5h1M332 197.5h1M357 198.5h1M296 199.5h1M333 200.5h1M353 200.5h1M298 201.5h1M349 202.5h1M300 203.5h1M335 203.5h1M345 204.5h1M302 205.5h1M336 206.5h1M341 206.5h1M746.5 206v2M749.5 206v2M752 206.5h1M304 207.5h1M745.5 207v2M748.5 207v2M751.5 207v2M337.5 208v2M747.5 208v2M750.5 208v2M306 209.5h1M744 209.5h1M333 210.5h1M308 211.5h1M746.5 211v2M749.5 211v2M752 211.5h1M329 212.5h1M338 212.5h1M745.5 212v2M748.5 212v2M751.5 212v2M310 213.5h1M747.5 213v2M750.5 213v2M325 214.5h1M744 214.5h1M312 215.5h1M339 215.5h1M321 216.5h1M314 217.5h1M317 218.5h1M340 218.5h1M316 219.5h1M313 220.5h1M318 221.5h1M341 221.5h1M309 222.5h1M320 223.5h1M305 224.5h1M342 224.5h1M322 225.5h1M301 226.5h1M324 227.5h1M343 227.5h1M297 228.5h1M326 229.5h1M293 230.5h1M345 230.5h1M328 231.5h1M289 232.5h1M330 233.5h1M346 233.5h1M285 234.5h1M332 235.5h1M281 236.5h1M347 236.5h1M334 237.5h1M277 238.5h1M336 239.5h1M348 239.5h1M273 240.5h1M338 241.5h1M269 242.5h1M349 242.5h1M340 243.5h1M265 244.5h1M342 245.5h1M350 245.5h1M261 246.5h1M344 247.5h1M257 248.5h1M351 248.5h1M346 249.5h1M253 250.5h1M348 251.5h1M352 251.5h1M249 252.5h1M349 253.5h1M245 254.5h1M353 254.5h1M351 255.5h1M241 256.5h1M746 256.5h1M750 256.5h1M353 257.5h1M355 257.5h1M747 257.5h3M237 258.5h1M746.5 258v3M750.5 258v3M355 259.5h1M233 260.5h1M356 260.5h1M357 261.5h1M747 261.5h3M229 262.5h1M748.5 262v3M357 263.5h1M359 263.5h1M746 263.5h2M749 263.5h2M225 264.5h1M361 265.5h1M221 266.5h1M358 266.5h1M747 266.5h3M363 267.5h1M746.5 267v3M750.5 267v3M217 268.5h1M359 269.5h1M365 269.5h1M213 270.5h1M747 270.5h3M367 271.5h1M748.5 271v4M209 272.5h1M360 272.5h1M746 272.5h2M749 272.5h2M369 273.5h1M205 274.5h1M361 275.5h1M371 275.5h1M201 276.5h1M373 277.5h1M197 278.5h1M362 278.5h1M375 279.5h1M193 280.5h1M364 281.5h1M377 281.5h1M189 282.5h1M379 283.5h1M185 284.5h1M365 284.5h1M381 285.5h1M181 286.5h1M366 287.5h1M383 287.5h1M177 288.5h1M385 289.5h1M173 290.5h1M367 290.5h1M387 291.5h1M169 292.5h1M368 293.5h1M389 293.5h1M165 294.5h1M391 295.5h1M161 296.5h1M369 296.5h1M393 297.5h1M157 298.5h1M370 299.5h1M395 299.5h1M397 301.5h1M371 302.5h1M399 303.5h1M372 305.5h1M401 305.5h1M745 306.5h1M751 306.5h1M403 307.5h1M746.5 307v4M750.5 307v4M374 308.5h1M748.5 308v5M405 309.5h1M747 309.5h1M749 309.5h1M375 311.5h1M407 311.5h1M745 311.5h1M751 311.5h1M747.5 312v2M749.5 312v2M408 313.5h1M376 314.5h1M748 314.5h1M410 315.5h1M377 317.5h1M412 317.5h1M414 319.5h1M378 320.5h1M416 321.5h1M379 323.5h1M418 323.5h1M420 325.5h1M380 326.5h1M422 327.5h1M381 329.5h1M424 329.5h1M426 331.5h1M383 332.5h1M428 333.5h1M384 335.5h1M430 335.5h1M556 336.5h5M432 337.5h1M555 337.5h1M561 337.5h1M385 338.5h1M554.5 338v3M562.5 338v3M434 339.5h1M386 341.5h1M555.5 341v2M561.5 341v2M442 342.5h1M550 342.5h5M556 342.5h1M560 342.5h1M562 342.5h5M469 343.5h5M387 344.5h1M468 344.5h1M474 344.5h1M467.5 345v5M475.5 345v5M550 346.5h17M388 347.5h1M389 350.5h1M468 350.5h1M474 350.5h1M469 351.5h5M471.5 352v8M390 353.5h1M467 355.5h4M472 355.5h4M391 356.5h1M393 359.5h1M394 362.5h1M395 365.5h1M396 368.5h1M397 371.5h1M398 374.5h1M399 377.5h1M400 380.5h1M402 383.5h1M403 386.5h1M404 389.5h1M405 392.5h1M410 399.5h1M429 411.5h1M437 411.5h1M430 412.5h1M436 412.5h1M431 413.5h5M430 414.5h1M436 414.5h1M429.5 415v5M437.5 415v5M430 420.5h1M436 420.5h1M431 421.5h5M433.5 422v6M429 425.5h4M434 425.5h4M127 494.5h1M141 494.5h1M128 495.5h1M140 495.5h1M129 496.5h11M131.5 497v12M137.5 497v12M129 508.5h2M132 508.5h5M138 508.5h2M128 509.5h1M140 509.5h1M127 510.5h1M141 510.5h1"/>
<path stroke="#ffff00" d="M334.5 32v9M340.5 32v3M344 32.5h3M341 33.5h1M343 33.5h1M347 33.5h1M332 34.5h2M342 34.5h1M348.5 34v3M339 35.5h1M341 35.5h1M338.5 36v5M342 36.5h1M343 37.5h1M347 37.5h1M344 38.5h3M345 39.5h1M346 40.5h1M335 41.5h1M337 41.5h1M347 41.5h1M336.5 42v5M348.5 42v5M347 47.5h1M346 48.5h1M745 116.5h1M751 116.5h1M746 117.5h1M750 117.5h1M747 118.5h3M746 119.5h1M750 119.5h1M745.5 120v3M751.5 120v3M746 123.5h1M750 123.5h1M747 124.5h3M318 151.5h1M744 156.5h1M746 156.5h1M748 156.5h1M745.5 157v7M747.5 157v7M749.5 157v6M751.5 157v6M750 158.5h1M750 163.5h1M749 164.5h1M751 164.5h1M215 182.5h2M745.5 196v5M748.5 196v2M750 196.5h2M744 197.5h1M749.5 197v2M752.5 197v2M747.5 198v3M750 199.5h2M751 200.5h1M746.5 201v3M752.5 201v3M751 204.5h1M747.5 296v8M745 297.5h2M748 297.5h2M749 299.5h2M748 300.5h1M751.5 300v2M750.5 302v2M751 304.5h1M48 384.5h1M60 384.5h1M49.5 385v2M59.5 385v2M50 387.5h2M57 387.5h2M52 388.5h5M50 389.5h2M57 389.5h2M49.5 390v2M59.5 390v2M48.5 392v5M60.5 392v5M406 395.5h1M49.5 397v2M59.5 397v2M50 399.5h2M57 399.5h2M402 399.5h1M52 400.5h5M398 403.5h1M394 407.5h1M268 445.5h1M494 457.5h1M498 457.5h1M502 457.5h1M495 458.5h1M497 458.5h1M499 458.5h1M501 458.5h1M503 458.5h1M496.5 459v13M500.5 459v13M504.5 459v11M508.5 459v11M507 460.5h1M506 461.5h1M505 462.5h1M260.5 467v15M256 469.5h4M261 469.5h4M505 470.5h1M507 470.5h1M506 471.5h1M505 472.5h1M507 472.5h1M264 473.5h3M504 473.5h1M508 473.5h1M263 474.5h1M267 474.5h1M261 475.5h2M268.5 475v3M267 478.5h1M266.5 479v3M267 482.5h1M268 483.5h1"/>
<path stroke="#0000ff" d="M242.5 119v5M248.5 119v17M254.5 119v5M241 121.5h1M243 121.5h1M246 121.5h2M249 121.5h2M253 121.5h1M255 121.5h1M243.5 124v2M253.5 124v2M88 125.5h1M104 125.5h1M89 126.5h1M103 126.5h1M244 126.5h2M251 126.5h2M90 127.5h1M102 127.5h1M246 127.5h2M249 127.5h2M91.5 128v2M101.5 128v2M92.5 130v7M100.5 130v7M244 131.5h4M249 131.5h4M88 133.5h4M93 133.5h7M101 133.5h4M91.5 137v2M101.5 137v2M747 137.5h3M745 138.5h2M750 138.5h2M90 139.5h1M102 139.5h1M744 139.5h1M749.5 139v2M752.5 139v2M89 140.5h1M103 140.5h1M745 140.5h2M88 141.5h1M104 141.5h1M744.5 141v2M747.5 141v2M750 141.5h2M752 142.5h1M745 143.5h2M750 143.5h2M747 144.5h3M400.5 147v5M405 147.5h3M412.5 147v5M404.5 148v3M408.5 148v3M405 151.5h3M401.5 152v2M411.5 152v2M402 154.5h2M409 154.5h2M257 155.5h1M404 155.5h5M406.5 156v8M402 159.5h4M407 159.5h4M744 176.5h1M746 176.5h1M748 176.5h1M745.5 177v7M747.5 177v7M749.5 177v7M388 179.5h1M752.5 182v2M214 183.5h1M750 184.5h2M218 185.5h1M216 186.5h1M221 188.5h1M219 189.5h1M223 191.5h1M221 192.5h1M225 194.5h1M224 195.5h1M228 197.5h1M226 198.5h1M536 198.5h1M540 198.5h1M544 198.5h1M537 199.5h1M539 199.5h1M541 199.5h1M543 199.5h1M545 199.5h1M230 200.5h1M538.5 200v13M542.5 200v13M546.5 200v13M228 201.5h1M233 203.5h1M231 204.5h1M235 206.5h1M233 207.5h1M237 209.5h1M551.5 209v4M236 210.5h1M550 210.5h1M552 210.5h1M240 212.5h1M238 213.5h1M547 213.5h1M550 213.5h1M548 214.5h2M242 215.5h1M241 216.5h1M744 216.5h1M752 216.5h1M745 217.5h1M751 217.5h1M244 218.5h1M746.5 218v5M750.5 218v5M243 219.5h1M744 220.5h2M747 220.5h3M751 220.5h2M247 221.5h1M245 222.5h1M745 223.5h1M751 223.5h1M249 224.5h1M744 224.5h1M752 224.5h1M248 225.5h1M252 227.5h1M250 228.5h1M254 230.5h1M253 231.5h1M256 233.5h1M255 234.5h1M259 236.5h1M257 237.5h1M261 239.5h1M260 240.5h1M263 242.5h1M262 243.5h1M266 245.5h1M265 246.5h1M746 246.5h3M745 247.5h1M749 247.5h2M268 248.5h1M746 248.5h1M750 248.5h1M267 249.5h1M747.5 249v3M751.5 249v3M271 251.5h1M269 252.5h1M746 252.5h1M750.5 252v2M745 253.5h1M749 253.5h1M273 254.5h1M746 254.5h3M272 255.5h1M275 257.5h1M274 258.5h1M278 260.5h1M277 261.5h1M280 263.5h1M279 264.5h1M282.5 266v2M285 269.5h1M284 270.5h1M287 272.5h1M286 273.5h1M290 275.5h1M289 276.5h1M292 278.5h1M291 279.5h1M294.5 281v2M297 284.5h1M296 285.5h1M299 287.5h1M298 288.5h1M301.5 290v2M304 293.5h1M303 294.5h1M306.5 296v2M309 299.5h1M308 300.5h1M311 302.5h1M310 303.5h1M313.5 305v2M316 308.5h1M315 309.5h1M318.5 311v2M320.5 314v2M745.5 316v3M748.5 316v9M751.5 316v3M323 317.5h1M744 317.5h1M747 317.5h1M749 317.5h1M752 317.5h1M322 318.5h1M746 319.5h1M750 319.5h1M325.5 320v2M747 320.5h1M749 320.5h1M746 322.5h2M749 322.5h2M328 323.5h1M327 324.5h1M330.5 326v2M745.5 326v3M748 326.5h1M751.5 326v3M747 327.5h1M749 327.5h1M748 328.5h1M332.5 329v2M746 329.5h1M750 329.5h1M747 330.5h3M748.5 331v4M335.5 332v2M746 332.5h2M749 332.5h2M337.5 335v2M339.5 338v2M342.5 341v2M344.5 344v2M347.5 347v2M349.5 350v2M351.5 353v2M354.5 356v2M356.5 359v2M358 362.5h1M359 363.5h1M361.5 365v2M363.5 368v2M366.5 371v2M368.5 374v2M370 377.5h1M371 378.5h1M373.5 380v2M375 383.5h1M376 384.5h1M377 386.5h1M378 387.5h1M380.5 389v2M382 392.5h1M383 393.5h1M385.5 395v2M387 398.5h1M388 399.5h1M390 402.5h1M392.5 404v2M310 448.5h1M308 470.5h5M307 471.5h1M313 471.5h2M306 472.5h1M315 472.5h1M307 473.5h1M316 473.5h1M308 474.5h1M317.5 474v2M309.5 475v2M318.5 476v5M310.5 477v3M309.5 480v2M317.5 481v2M308 482.5h1M307 483.5h1M316 483.5h1M306 484.5h1M315 484.5h1M307 485.5h1M313 485.5h2M308 486.5h5M256 551.5h5M253 552.5h3M261 552.5h1M252 553.5h1M262 553.5h3M251 554.5h1M261 554.5h1M265 554.5h1M250 555.5h1M260.5 555v3M266.5 555v3M252 557.5h3M251 558.5h1M255 558.5h1M261 558.5h1M265 558.5h1M250.5 559v3M256.5 559v3M262 559.5h3M266 561.5h1M251 562.5h1M255 562.5h1M265 562.5h1M252 563.5h3M264 563.5h1M255 564.5h1M261 564.5h3M256 565.5h5"/>
<path stroke="#00ffff" d="M428 362.5h1M426 363.5h2M425 364.5h1M423 365.5h2M422 366.5h1M420 367.5h2M419 368.5h1M417 369.5h2M416 370.5h1M414 371.5h2M413 372.5h1M411 373.5h2M410 374.5h1M408 375.5h2M407 376.5h1M405 377.5h2M404 378.5h1M402 379.5h2M401 380.5h1M399 381.5h2M398 382.5h1M397 383.5h1M395 384.5h2M394 385.5h1M392 386.5h2M391 387.5h1M389 388.5h2M388 389.5h1M386 390.5h2M385 391.5h1M383 392.5h2M382 393.5h1M380 394.5h2M379 395.5h1M405 395.5h1M377 396.5h2M402 396.5h3M376 397.5h1M399 397.5h3M374 398.5h2M396 398.5h3M373 399.5h1M393 399.5h3M371 400.5h2M390 400.5h3M370 401.5h1M387 401.5h3M368 402.5h2M384 402.5h3M367 403.5h1M381 403.5h3M365 404.5h2M378 404.5h3M364 405.5h1M375 405.5h3M362 406.5h2M371 406.5h4M361 407.5h1M368 407.5h3M359 408.5h2M365 408.5h3M358 409.5h1M362 409.5h3M356 410.5h2M359 410.5h3M355 411.5h4M353 412.5h3M350 413.5h3M347 414.5h5M344 415.5h3M349 415.5h1M341 416.5h3M347 416.5h2M338 417.5h3M346 417.5h1M335 418.5h3M344 418.5h2M332 419.5h3M343 419.5h1M329 420.5h3M341 420.5h2M326 421.5h3M340 421.5h1M323 422.5h3M339 422.5h1M320 423.5h3M337 423.5h2M317 424.5h3M336 424.5h1M314 425.5h3M334 425.5h2M311 426.5h3M333 426.5h1M308 427.5h3M331 427.5h2M305 428.5h3M330 428.5h1M301 429.5h4M328 429.5h2M298 430.5h3M327 430.5h1M295 431.5h3M325 431.5h2M292 432.5h3M324 432.5h1M289 433.5h3M322 433.5h2M286 434.5h3M321 434.5h1M283 435.5h3M319 435.5h2M280 436.5h3M318 436.5h1M277 437.5h3M316 437.5h2M274 438.5h3M315 438.5h1M271 439.5h3M313 439.5h2M269 440.5h2M312 440.5h1M310 441.5h2M309 442.5h1"/>
<path stroke="#ffffff" d="M285 15.5h28M275 16.5h10M313 16.5h10M265 17.5h10M323 17.5h10M255 18.5h10M271.5 18v5M333 18.5h10M248 19.5h7M343 19.5h8M243 20.5h5M351 20.5h5M238 21.5h5M356 21.5h5M234 22.5h4M361 22.5h4M230 23.5h4M272.5 23v11M365 23.5h4M226 24.5h4M369 24.5h3M223 25.5h3M372 25.5h4M220 26.5h3M376 26.5h3M217 27.5h3M379 27.5h3M214 28.5h3M382 28.5h3M211 29.5h3M385 29.5h3M207 30.5h4M388 30.5h3M204 31.5h3M391 31.5h4M201 32.5h3M395 32.5h3M199 33.5h2M398 33.5h2M197 34.5h2M273.5 34v10M400 34.5h2M195 35.5h2M402 35.5h2M192 36.5h3M404 36.5h3M190 37.5h2M407 37.5h2M188 38.5h2M409 38.5h2M186 39.5h2M411 39.5h2M183 40.5h3M413 40.5h3M181 41.5h2M415 41.5h3M179 42.5h2M415 42.5h1M418 42.5h2M177 43.5h2M414.5 43v2M420 43.5h2M174 44.5h3M274.5 44v11M422 44.5h3M172 45.5h2M413.5 45v2M425 45.5h2M170 46.5h2M427 46.5h2M168 47.5h2M412.5 47v2M429 47.5h2M166 48.5h2M431 48.5h2M164 49.5h2M411.5 49v2M433 49.5h2M162 50.5h2M435 50.5h2M160 51.5h2M410.5 51v2M437 51.5h2M158 52.5h2M439 52.5h2M157 53.5h1M409.5 53v3M441 53.5h1M155 54.5h2M442 54.5h2M153 55.5h2M275.5 55v11M444 55.5h1M152 56.5h1M408.5 56v2M445 56.5h2M150 57.5h2M447 57.5h2M149 58.5h1M407.5 58v2M449 58.5h1M147 59.5h2M450 59.5h2M146 60.5h1M287 60.5h24M406.5 60v2M452 60.5h1M144 61.5h2M270 61.5h5M276 61.5h11M296.5 61v15M311 61.5h17M453 61.5h2M143 62.5h1M264 62.5h6M316.5 62v6M328 62.5h6M405.5 62v2M455 62.5h1M141 63.5h2M260 63.5h4M334 63.5h4M456 63.5h2M140 64.5h1M254 64.5h6M337 64.5h7M404.5 64v2M458 64.5h1M138 65.5h2M248 65.5h6M255.5 65v4M337.5 65v2M344 65.5h6M459 65.5h2M136 66.5h2M244 66.5h4M276.5 66v6M350 66.5h4M403.5 66v3M461 66.5h1M135 67.5h1M240 67.5h4M336.5 67v4M354 67.5h5M462 67.5h2M133 68.5h2M236 68.5h4M315.5 68v9M357.5 68v3M359 68.5h4M464 68.5h2M132 69.5h2M232 69.5h4M256.5 69v6M363 69.5h4M402.5 69v2M466 69.5h1M130 70.5h2M134.5 70v2M229 70.5h3M234.5 70v2M367 70.5h2M467 70.5h1M129 71.5h1M227 71.5h2M335.5 71v4M356.5 71v4M369 71.5h3M401.5 71v2M468 71.5h2M128 72.5h1M135 72.5h1M224 72.5h3M235.5 72v3M277.5 72v5M372 72.5h3M470 72.5h1M126 73.5h2M136 73.5h1M220 73.5h4M375 73.5h4M400.5 73v2M471 73.5h1M125 74.5h1M137.5 74v2M217 74.5h3M377.5 74v2M379 74.5h3M472 74.5h2M124 75.5h1M214 75.5h3M236.5 75v4M257.5 75v5M288 75.5h8M297 75.5h13M334.5 75v4M355.5 75v4M382 75.5h2M399.5 75v2M474 75.5h1M123 76.5h1M138 76.5h1M212 76.5h2M215.5 76v2M272 76.5h5M278 76.5h10M310 76.5h5M316 76.5h10M376.5 76v2M384 76.5h3M475 76.5h1M122 77.5h1M139 77.5h1M209 77.5h3M265 77.5h7M326 77.5h8M387 77.5h2M398.5 77v2M476 77.5h1M121 78.5h1M140.5 78v2M207 78.5h2M216.5 78v3M259 78.5h6M327.5 78v3M335 78.5h4M375.5 78v3M389 78.5h2M477 78.5h1M120 79.5h1M205 79.5h2M237.5 79v3M255 79.5h2M258 79.5h1M339 79.5h4M354.5 79v4M391 79.5h2M397.5 79v3M478 79.5h1M119 80.5h1M141 80.5h1M203 80.5h2M251 80.5h4M343 80.5h4M393 80.5h2M479 80.5h1M118 81.5h1M142.5 81v2M201 81.5h2M217.5 81v4M247 81.5h4M326.5 81v7M347 81.5h4M374.5 81v3M395 81.5h2M480 81.5h1M117 82.5h1M199 82.5h2M238.5 82v3M244 82.5h3M351 82.5h3M396 82.5h1M398 82.5h2M481 82.5h1M115 83.5h2M143 83.5h1M197 83.5h2M240 83.5h4M355 83.5h4M395.5 83v2M400 83.5h2M482 83.5h1M114 84.5h1M144 84.5h1M194 84.5h3M236 84.5h2M239 84.5h1M359 84.5h3M373.5 84v2M402 84.5h2M483 84.5h2M113 85.5h1M145.5 85v2M192 85.5h2M195 85.5h1M218.5 85v3M232 85.5h4M362 85.5h4M394.5 85v3M404 85.5h2M485 85.5h1M111 86.5h2M190 86.5h2M196.5 86v2M229 86.5h3M366 86.5h4M372.5 86v3M406 86.5h2M486 86.5h1M110 87.5h1M146 87.5h1M188 87.5h2M227 87.5h2M370 87.5h2M408 87.5h2M487 87.5h2M109 88.5h1M147.5 88v2M187 88.5h1M197.5 88v2M219.5 88v3M225 88.5h2M325.5 88v8M373 88.5h1M393.5 88v3M410 88.5h2M489 88.5h1M108 89.5h1M185 89.5h2M221 89.5h4M226 89.5h1M374 89.5h3M412 89.5h2M490 89.5h1M107 90.5h1M148 90.5h1M183 90.5h2M198.5 90v2M217 90.5h2M220 90.5h1M227.5 90v3M377 90.5h4M414 90.5h2M491 90.5h1M106 91.5h1M149 91.5h1M181 91.5h2M214 91.5h3M381 91.5h4M392.5 91v2M415 91.5h3M492 91.5h1M105 92.5h1M150.5 92v2M180 92.5h1M199.5 92v2M212 92.5h2M385 92.5h2M414.5 92v2M418 92.5h1M493 92.5h1M104 93.5h1M178 93.5h2M210 93.5h2M228.5 93v2M387 93.5h2M391.5 93v3M419 93.5h2M494 93.5h1M103 94.5h1M151 94.5h1M176 94.5h2M200.5 94v2M208 94.5h2M389 94.5h2M413.5 94v2M421 94.5h2M495 94.5h1M102 95.5h1M152 95.5h1M174 95.5h2M178.5 95v2M206 95.5h2M229.5 95v3M392 95.5h1M423 95.5h2M496 95.5h1M101 96.5h1M153.5 96v2M173 96.5h1M201.5 96v3M204 96.5h2M324.5 96v7M393 96.5h2M412 96.5h1M425 96.5h1M497 96.5h1M100 97.5h1M171 97.5h2M179.5 97v2M202 97.5h2M395 97.5h2M411.5 97v2M426 97.5h2M498 97.5h1M99 98.5h1M154 98.5h1M170 98.5h1M200 98.5h1M230.5 98v3M397 98.5h2M428 98.5h1M499 98.5h1M98 99.5h1M155.5 99v2M169 99.5h1M180 99.5h1M198 99.5h2M399 99.5h2M410.5 99v2M429 99.5h1M500 99.5h1M97 100.5h1M167 100.5h2M181.5 100v2M196 100.5h2M401 100.5h2M430 100.5h2M501 100.5h1M96 101.5h1M156 101.5h1M166 101.5h1M194 101.5h2M231.5 101v2M403 101.5h2M409.5 101v2M432 101.5h1M502 101.5h1M95 102.5h1M157 102.5h1M164 102.5h2M182.5 102v2M192 102.5h2M405 102.5h2M433 102.5h2M503 102.5h1M94 103.5h1M158.5 103v2M163 103.5h1M190 103.5h2M232.5 103v3M323.5 103v5M407 103.5h2M432.5 103v2M435 103.5h1M504 103.5h1M93 104.5h1M162 104.5h1M183.5 104v2M188 104.5h2M409 104.5h2M436 104.5h1M505 104.5h1M92 105.5h1M159 105.5h3M187 105.5h1M283 105.5h33M411 105.5h1M431 105.5h1M437 105.5h2M506 105.5h1M91 106.5h1M159 106.5h2M184 106.5h3M233.5 106v3M276 106.5h7M316 106.5h7M412 106.5h2M430 106.5h1M439 106.5h1M507 106.5h1M90 107.5h1M157 107.5h2M161.5 107v2M184 107.5h1M269 107.5h7M324 107.5h5M414 107.5h1M429.5 107v2M440 107.5h2M508 107.5h1M89 108.5h1M156 108.5h1M182 108.5h2M263 108.5h6M329 108.5h7M415 108.5h2M442 108.5h1M509 108.5h1M88 109.5h1M155 109.5h1M162 109.5h1M181 109.5h1M234.5 109v2M258 109.5h5M336 109.5h5M416 109.5h2M428 109.5h1M443 109.5h1M510 109.5h1M87 110.5h1M153 110.5h2M163 110.5h1M179 110.5h2M254 110.5h4M341 110.5h4M415.5 110v2M418 110.5h2M427 110.5h1M444 110.5h2M511 110.5h1M86.5 111v2M152 111.5h1M164.5 111v2M177 111.5h2M235.5 111v3M251 111.5h3M345 111.5h3M420 111.5h2M426.5 111v2M446 111.5h1M512.5 111v2M151 112.5h1M175 112.5h2M248 112.5h3M348 112.5h3M414 112.5h1M422 112.5h2M447 112.5h1M85 113.5h1M149 113.5h2M165 113.5h1M174 113.5h1M245 113.5h3M351 113.5h3M413.5 113v2M424 113.5h2M448 113.5h1M513 113.5h1M84 114.5h1M148 114.5h1M166 114.5h1M173 114.5h1M236.5 114v3M241 114.5h4M354 114.5h4M425 114.5h1M449 114.5h2M514 114.5h1M83.5 115v2M147 115.5h1M167.5 115v2M171 115.5h2M238 115.5h3M358 115.5h3M412.5 115v2M426 115.5h1M448.5 115v2M451 115.5h1M515.5 115v2M146 116.5h1M170 116.5h1M235 116.5h1M237 116.5h1M361 116.5h3M427 116.5h2M452 116.5h1M82 117.5h1M145 117.5h1M168 117.5h2M232 117.5h3M364 117.5h3M411 117.5h1M429 117.5h1M447 117.5h1M453 117.5h1M516 117.5h1M81 118.5h1M144 118.5h1M168 118.5h1M229 118.5h3M367 118.5h3M410.5 118v2M430 118.5h1M446 118.5h1M454 118.5h1M517 118.5h1M80 119.5h1M142 119.5h2M166 119.5h2M226 119.5h3M370 119.5h3M431 119.5h2M445.5 119v2M455 119.5h2M518 119.5h1M79 120.5h1M141 120.5h1M144 120.5h1M165 120.5h1M224 120.5h2M373 120.5h2M409 120.5h1M433 120.5h1M457 120.5h1M519 120.5h1M78 121.5h1M140 121.5h1M145 121.5h1M164 121.5h1M222 121.5h2M375 121.5h2M408.5 121v2M434 121.5h1M444 121.5h1M458 121.5h1M520 121.5h1M77 122.5h1M139 122.5h1M146 122.5h1M162 122.5h2M219 122.5h3M377 122.5h2M435 122.5h2M443 122.5h1M459 122.5h1M521 122.5h1M76 123.5h1M138 123.5h1M147 123.5h1M161 123.5h1M217 123.5h2M379 123.5h2M407.5 123v2M437 123.5h1M442.5 123v2M460 123.5h1M522 123.5h1M75 124.5h1M136 124.5h2M148.5 124v2M160 124.5h1M215 124.5h2M381 124.5h2M438 124.5h1M461 124.5h1M523 124.5h1M74 125.5h1M135 125.5h1M158 125.5h2M213 125.5h2M383 125.5h2M406 125.5h1M439 125.5h1M441.5 125v2M462 125.5h2M524 125.5h1M73.5 126v2M134 126.5h1M149 126.5h1M157 126.5h1M211 126.5h2M385 126.5h2M405.5 126v2M440 126.5h1M464 126.5h1M525.5 126v2M133 127.5h1M150 127.5h1M156 127.5h1M209 127.5h2M387 127.5h2M442 127.5h1M465.5 127v2M72 128.5h1M132 128.5h1M151 128.5h1M155 128.5h1M207 128.5h2M389 128.5h2M404 128.5h1M443 128.5h1M466 128.5h1M526 128.5h1M71 129.5h1M131 129.5h1M152.5 129v2M154 129.5h1M205 129.5h2M391 129.5h2M403.5 129v2M444 129.5h1M464 129.5h1M467 129.5h1M527 129.5h1M70.5 130v2M130 130.5h1M153 130.5h1M203 130.5h2M393 130.5h2M445 130.5h1M463 130.5h1M468 130.5h1M528.5 130v2M129 131.5h1M151 131.5h1M202 131.5h1M395 131.5h2M402.5 131v2M446 131.5h2M462 131.5h1M469 131.5h1M69 132.5h1M128.5 132v2M150 132.5h1M200 132.5h2M397 132.5h2M448 132.5h1M461 132.5h1M470 132.5h1M529.5 132v2M68.5 133v2M127 133.5h1M149 133.5h1M199 133.5h1M320.5 133v3M399 133.5h1M401.5 133v2M449 133.5h1M460 133.5h1M471 133.5h1M530.5 133v2M126 134.5h1M129 134.5h1M148 134.5h1M197 134.5h2M400 134.5h1M450 134.5h1M459 134.5h1M472 134.5h1M527 134.5h2M67 135.5h1M125 135.5h1M130 135.5h1M147 135.5h1M196 135.5h1M402 135.5h1M451 135.5h1M458 135.5h1M473 135.5h1M526 135.5h1M531 135.5h1M66.5 136v2M124.5 136v2M131 136.5h1M146 136.5h1M194 136.5h2M319.5 136v6M403 136.5h2M452 136.5h1M457 136.5h1M474.5 136v2M525 136.5h1M532.5 136v2M132 137.5h1M145 137.5h1M192 137.5h2M405 137.5h2M453 137.5h1M456 137.5h1M523 137.5h2M65.5 138v2M123 138.5h1M133 138.5h1M144 138.5h1M191 138.5h1M407 138.5h1M454 138.5h2M475 138.5h1M522 138.5h1M533.5 138v2M122 139.5h1M134 139.5h1M143 139.5h1M189 139.5h2M408 139.5h2M455 139.5h1M476 139.5h1M520 139.5h2M64 140.5h1M121 140.5h1M135 140.5h1M142 140.5h1M188 140.5h1M410 140.5h1M456 140.5h1M477 140.5h1M519 140.5h1M534 140.5h1M63.5 141v2M120 141.5h1M136 141.5h1M141 141.5h1M186 141.5h2M411 141.5h2M457 141.5h1M478 141.5h1M518 141.5h1M535.5 141v2M119.5 142v2M137 142.5h1M140 142.5h1M185 142.5h1M318.5 142v4M413 142.5h1M458 142.5h1M479.5 142v2M516 142.5h2M62 143.5h1M138 143.5h2M184 143.5h1M414 143.5h1M459 143.5h1M515 143.5h1M536 143.5h1M61.5 144v2M118 144.5h1M138 144.5h1M182 144.5h2M415 144.5h2M460 144.5h1M478 144.5h1M480 144.5h1M514 144.5h1M537.5 144v2M117 145.5h1M137 145.5h1M181 145.5h1M417 145.5h1M461 145.5h1M477 145.5h1M481 145.5h1M512 145.5h2M60 146.5h1M116 146.5h1M136 146.5h1M180 146.5h1M418 146.5h1M462 146.5h1M476 146.5h1M482 146.5h1M511 146.5h1M538 146.5h1M59.5 147v2M115 147.5h1M135 147.5h1M179 147.5h1M419 147.5h1M463 147.5h1M474 147.5h2M483 147.5h1M509 147.5h2M539.5 147v2M114.5 148v2M134 148.5h1M177 148.5h2M420 148.5h1M464 148.5h1M473 148.5h1M484 148.5h1M508 148.5h1M58 149.5h1M113.5 149v2M133 149.5h1M176 149.5h1M421 149.5h2M465 149.5h1M472 149.5h1M485.5 149v2M507 149.5h1M540 149.5h1M57.5 150v2M115 150.5h2M132 150.5h1M175 150.5h1M423 150.5h1M466 150.5h1M471 150.5h1M505 150.5h2M541.5 150v2M112 151.5h1M117 151.5h1M131 151.5h1M174 151.5h1M424 151.5h1M467 151.5h1M470 151.5h1M486 151.5h1M504 151.5h1M56 152.5h1M111 152.5h1M118 152.5h1M130.5 152v2M173 152.5h1M425 152.5h1M468 152.5h2M487 152.5h1M502 152.5h2M542 152.5h1M55.5 153v2M110.5 153v2M119 153.5h2M171 153.5h2M426 153.5h2M468 153.5h1M488.5 153v2M501 153.5h1M543.5 153v2M121 154.5h1M129 154.5h1M170 154.5h1M428 154.5h1M469 154.5h1M500 154.5h1M54.5 155v2M109 155.5h1M122 155.5h1M128 155.5h1M169 155.5h1M429 155.5h1M470 155.5h1M489 155.5h1M498 155.5h2M544.5 155v2M108 156.5h1M123 156.5h2M127 156.5h1M168 156.5h1M430 156.5h1M471 156.5h1M490 156.5h1M497 156.5h1M53 157.5h1M107.5 157v2M125.5 157v3M126 157.5h1M167 157.5h1M431 157.5h1M472 157.5h1M491.5 157v2M496 157.5h1M545 157.5h1M52.5 158v2M166 158.5h1M432 158.5h1M473.5 158v2M494 158.5h2M546.5 158v2M106 159.5h1M165 159.5h1M433 159.5h1M492 159.5h2M51.5 160v2M105.5 160v2M124 160.5h1M126 160.5h1M164 160.5h1M434 160.5h1M474 160.5h1M492 160.5h2M547.5 160v2M123 161.5h1M127 161.5h2M163 161.5h1M435 161.5h1M475 161.5h1M490 161.5h2M493 161.5h1M50.5 162v2M104 162.5h1M122.5 162v2M129 162.5h1M162 162.5h1M436 162.5h1M476.5 162v2M489 162.5h1M494 162.5h1M548.5 162v2M103 163.5h1M130 163.5h1M161 163.5h1M437 163.5h1M488 163.5h1M495 163.5h1M49.5 164v2M102.5 164v2M121 164.5h1M131 164.5h1M160 164.5h1M438 164.5h1M477 164.5h1M486 164.5h2M496.5 164v2M549.5 164v2M120 165.5h1M132 165.5h1M159 165.5h1M399 165.5h1M439 165.5h1M478 165.5h1M485 165.5h1M48.5 166v2M101 166.5h1M103 166.5h2M119.5 166v2M133 166.5h2M158 166.5h1M398 166.5h1M440 166.5h1M479.5 166v2M484 166.5h1M497 166.5h1M550.5 166v2M100.5 167v2M105 167.5h1M135 167.5h1M157 167.5h1M397.5 167v2M441 167.5h1M482 167.5h2M498.5 167v2M47.5 168v2M106 168.5h1M118 168.5h1M136 168.5h1M156 168.5h1M442 168.5h1M480 168.5h2M551.5 168v2M99 169.5h1M107 169.5h2M117 169.5h1M137 169.5h1M155 169.5h1M396 169.5h1M443 169.5h1M481 169.5h1M499 169.5h1M46.5 170v2M98 170.5h1M109 170.5h1M116 170.5h1M138 170.5h2M154 170.5h1M395 170.5h1M444 170.5h1M482 170.5h1M500 170.5h1M552.5 170v2M97.5 171v2M110 171.5h1M115.5 171v2M140 171.5h1M153.5 171v2M394.5 171v2M445.5 171v2M483.5 171v2M501.5 171v2M45.5 172v2M111 172.5h2M141 172.5h1M553.5 172v2M96 173.5h1M113 173.5h2M142 173.5h1M152 173.5h1M393 173.5h1M446 173.5h1M484 173.5h1M502 173.5h1M44.5 174v3M95.5 174v2M113 174.5h1M143 174.5h1M151 174.5h1M392 174.5h1M447 174.5h1M485 174.5h1M503.5 174v2M554.5 174v3M112.5 175v2M144 175.5h2M150 175.5h1M448 175.5h1M486.5 175v2M94.5 176v2M146 176.5h1M149 176.5h1M449 176.5h1M504.5 176v2M43.5 177v2M111.5 177v2M147 177.5h2M450.5 177v2M487.5 177v2M555.5 177v2M93.5 178v2M148 178.5h1M502 178.5h2M505.5 178v2M42.5 179v2M110.5 179v2M147 179.5h1M451 179.5h1M488.5 179v2M500 179.5h2M556.5 179v2M92 180.5h1M146 180.5h1M452 180.5h1M498 180.5h2M506 180.5h1M41.5 181v3M91.5 181v3M109 181.5h1M145 181.5h1M453 181.5h1M486 181.5h2M489 181.5h1M497 181.5h1M507.5 181v2M557.5 181v2M108.5 182v2M144.5 182v2M454.5 182v2M484 182.5h2M490.5 182v2M495 182.5h2M40.5 183v3M42 183.5h1M90.5 183v2M483 183.5h1M493 183.5h2M508.5 183v2M558.5 183v3M43 184.5h2M92 184.5h2M107 184.5h1M143 184.5h1M455 184.5h1M481 184.5h2M491 184.5h2M45 185.5h2M89.5 185v2M94 185.5h2M106.5 185v2M142 185.5h1M456 185.5h1M480 185.5h1M492.5 185v2M509.5 185v2M39.5 186v2M47 186.5h2M96 186.5h1M141.5 186v2M457.5 186v2M478 186.5h2M559.5 186v2M49 187.5h2M88 187.5h1M97 187.5h2M105 187.5h1M476 187.5h2M493 187.5h1M510 187.5h1M38.5 188v2M51 188.5h2M87.5 188v2M99 188.5h2M104.5 188v2M140 188.5h1M458 188.5h1M475 188.5h1M494.5 188v2M511.5 188v2M560.5 188v2M53 189.5h3M101 189.5h2M139.5 189v2M459.5 189v2M473 189.5h2M37.5 190v2M56 190.5h2M86.5 190v2M103.5 190v2M472 190.5h1M495.5 190v2M512.5 190v2M561.5 190v2M58 191.5h2M138 191.5h1M460 191.5h1M470 191.5h2M36.5 192v3M60 192.5h2M85.5 192v2M102.5 192v2M137.5 192v2M461.5 192v2M468 192.5h2M496.5 192v2M513.5 192v2M562.5 192v3M62 193.5h2M467 193.5h1M64 194.5h2M84.5 194v3M101.5 194v2M136.5 194v2M462.5 194v2M465 194.5h2M497.5 194v2M514.5 194v3M35.5 195v2M66 195.5h3M464 195.5h1M513 195.5h1M563.5 195v2M69 196.5h2M100.5 196v2M135 196.5h1M498.5 196v2M511 196.5h2M34.5 197v2M71 197.5h2M83.5 197v2M134.5 197v2M464.5 197v2M509 197.5h2M515.5 197v2M564.5 197v2M73 198.5h2M99.5 198v2M499.5 198v2M507 198.5h2M33.5 199v2M75 199.5h2M82.5 199v2M133 199.5h1M465 199.5h1M505 199.5h2M516.5 199v2M565.5 199v2M77 200.5h2M98.5 200v2M132.5 200v2M466.5 200v2M500.5 200v2M503 200.5h2M32.5 201v3M79 201.5h3M501.5 201v3M502 201.5h1M517.5 201v2M566.5 201v3M81 202.5h2M97.5 202v2M131 202.5h1M467 202.5h1M80.5 203v2M83 203.5h2M130.5 203v2M468.5 203v2M518.5 203v2M31.5 204v3M85 204.5h3M96.5 204v2M502.5 204v2M567.5 204v3M79.5 205v2M88 205.5h3M129.5 205v2M469.5 205v2M519.5 205v2M91 206.5h2M95.5 206v2M503.5 206v2M30.5 207v4M78.5 207v2M93 207.5h2M128.5 207v2M470.5 207v2M520.5 207v2M568.5 207v4M94.5 208v2M504.5 208v2M77.5 209v3M127.5 209v2M471.5 209v2M521.5 209v3M93.5 210v2M505.5 210v2M29.5 211v3M126.5 211v2M472.5 211v2M569.5 211v3M76.5 212v2M92.5 212v2M506.5 212v2M522.5 212v2M125.5 213v2M473.5 213v2M28.5 214v3M75.5 214v3M91.5 214v3M507.5 214v3M523.5 214v3M570.5 214v3M124.5 215v2M474.5 215v2M521 215.5h2M518 216.5h3M27.5 217v3M74.5 217v3M90.5 217v4M123.5 217v2M475.5 217v2M508.5 217v4M514 217.5h4M524.5 217v3M571.5 217v3M511 218.5h3M122.5 219v3M476.5 219v3M509 219.5h2M26.5 220v3M73.5 220v4M525.5 220v4M572.5 220v3M74 221.5h2M89.5 221v4M509.5 221v4M76 222.5h2M121.5 222v2M477.5 222v2M25.5 223v3M78 223.5h3M573.5 223v3M72.5 224v3M81 224.5h3M120.5 224v2M478.5 224v2M526.5 224v3M84 225.5h2M88.5 225v2M510.5 225v2M24.5 226v4M86 226.5h2M119.5 226v3M479.5 226v3M574.5 226v4M71.5 227v2M87.5 227v2M511.5 227v2M527.5 227v2M70.5 229v3M86.5 229v3M118.5 229v3M480.5 229v3M512.5 229v3M528.5 229v3M23.5 230v4M575.5 230v4M69.5 232v4M85.5 232v4M117.5 232v3M481.5 232v3M513.5 232v4M529.5 232v4M22.5 234v4M527 234.5h2M576.5 234v4M116.5 235v3M482.5 235v3M524 235.5h3M68.5 236v4M84.5 236v4M514.5 236v4M520 236.5h4M530.5 236v4M517 237.5h3M21.5 238v5M115.5 238v3M483.5 238v3M515 238.5h2M577.5 238v5M67.5 240v4M83.5 240v4M515.5 240v4M531.5 240v4M68 241.5h3M114.5 241v4M484.5 241v4M71 242.5h4M20.5 243v5M75 243.5h4M578.5 243v5M66.5 244v4M79 244.5h4M516.5 244v3M532.5 244v4M82.5 245v2M113.5 245v3M485.5 245v3M81.5 247v4M517.5 247v4M19.5 248v7M65.5 248v6M112.5 248v3M486.5 248v3M533.5 248v6M579.5 248v7M80.5 251v4M111.5 251v3M487.5 251v3M518.5 251v4M64.5 254v6M110.5 254v4M488.5 254v4M534.5 254v6M18.5 255v10M79.5 255v4M519.5 255v4M530 255.5h4M580.5 255v10M524 256.5h6M520 257.5h4M109.5 258v5M489.5 258v5M78.5 259v6M520.5 259v6M63.5 260v4M535.5 260v4M64 261.5h3M67 262.5h4M71 263.5h4M108.5 263v6M490.5 263v6M62.5 264v6M75 264.5h3M536.5 264v6M17.5 265v10M77.5 265v7M521.5 265v7M581.5 265v10M107.5 269v7M491.5 269v7M61.5 270v17M537.5 270v17M576 271.5h5M76.5 272v16M522.5 272v16M565 272.5h11M555 273.5h10M544 274.5h11M16.5 275v10M533 275.5h4M538 275.5h6M582.5 275v10M106.5 276v7M492.5 276v7M527 276.5h6M523 277.5h4M62 282.5h6M68 283.5h8M105.5 283v33M493.5 283v33M15.5 285v28M583.5 285v28M60.5 287v24M538.5 287v24M75.5 288v22M523.5 288v22M524 296.5h14M76 299.5h29M131 299.5h13M494 299.5h29M61 302.5h14M76.5 310v16M522.5 310v16M61.5 311v17M537.5 311v17M16.5 313v10M582.5 313v10M523 315.5h7M106.5 316v7M492.5 316v7M530 316.5h7M72 321.5h4M66 322.5h6M17.5 323v10M55 323.5h6M62 323.5h4M107.5 323v6M491.5 323v6M581.5 323v10M44 324.5h11M34 325.5h10M23 326.5h11M77.5 326v8M521.5 326v9M18 327.5h5M62.5 328v6M536.5 328v6M108.5 329v7M490.5 329v7M18.5 333v10M580.5 333v10M63.5 334v4M78.5 334v5M520.5 334v5M522 334.5h2M535.5 334v4M524 335.5h4M109.5 336v5M489.5 336v5M528 336.5h4M532 337.5h3M64.5 338v6M534.5 338v6M79.5 339v4M519.5 339v4M75 341.5h4M110.5 341v4M488.5 341v4M69 342.5h6M19.5 343v8M65.5 343v7M66 343.5h3M80.5 343v4M518.5 343v4M579.5 343v8M448 344.5h2M533.5 344v6M111.5 345v3M450 345.5h3M487.5 345v3M453 346.5h2M81.5 347v4M455 347.5h3M517.5 347v4M112.5 348v3M458 348.5h2M486.5 348v3M66.5 350v4M532.5 350v4M20.5 351v5M82.5 351v4M113.5 351v3M485.5 351v3M516.5 351v4M578.5 351v5M67.5 354v5M114.5 354v4M484.5 354v4M517 354.5h3M531.5 354v5M83.5 355v4M515.5 355v4M520 355.5h4M21.5 356v5M524 356.5h4M577.5 356v5M528 357.5h3M115.5 358v3M483.5 358v3M68.5 359v4M84.5 359v3M514.5 359v3M530.5 359v4M82 360.5h2M22.5 361v4M79 361.5h3M116.5 361v3M482.5 361v3M576.5 361v4M75 362.5h4M85.5 362v4M513.5 362v4M69.5 363v4M72 363.5h3M529.5 363v4M70 364.5h2M117.5 364v3M481.5 364v3M23.5 365v4M575.5 365v4M86.5 366v4M512.5 366v4M70.5 367v2M118.5 367v3M439 367.5h1M480.5 367v3M528.5 367v2M440 368.5h2M24.5 369v3M71.5 369v3M442 369.5h2M527.5 369v3M574.5 369v3M87.5 370v2M119.5 370v3M444 370.5h2M479.5 370v3M511.5 370v3M446 371.5h2M25.5 372v4M72.5 372v3M88.5 372v2M448 372.5h2M510.5 372v2M512 372.5h1M526.5 372v3M573.5 372v4M120.5 373v2M450 373.5h1M478.5 373v2M513 373.5h2M89.5 374v3M509.5 374v3M515 374.5h3M73.5 375v4M121.5 375v2M477.5 375v2M518 375.5h3M525.5 375v4M26.5 376v3M521 376.5h2M572.5 376v3M90.5 377v4M122.5 377v2M476.5 377v2M508.5 377v4M523 377.5h2M27.5 379v3M74.5 379v3M88 379.5h2M123.5 379v2M475.5 379v2M524.5 379v3M571.5 379v3M85 380.5h3M81 381.5h4M91.5 381v4M124.5 381v2M474.5 381v2M507.5 381v4M28.5 382v3M75.5 382v2M78 382.5h3M523.5 382v2M570.5 382v3M76.5 383v4M77 383.5h1M125.5 383v2M473.5 383v2M522.5 384v3M29.5 385v3M92.5 385v2M126.5 385v2M472.5 385v2M506.5 385v2M569.5 385v3M77.5 387v2M93.5 387v2M127.5 387v2M471.5 387v2M505.5 387v2M521.5 387v2M30.5 388v3M568.5 388v3M78.5 389v2M94.5 389v2M128.5 389v2M470.5 389v2M504.5 389v3M520.5 389v2M31.5 391v4M79.5 391v2M95.5 391v2M129.5 391v2M469.5 391v2M503.5 391v2M505 391.5h1M519.5 391v2M567.5 391v4M506 392.5h2M80.5 393v2M96.5 393v2M130.5 393v2M468.5 393v2M502.5 393v2M508 393.5h3M518.5 393v2M511 394.5h3M32.5 395v3M81.5 395v3M97.5 395v3M131.5 395v2M467.5 395v2M501.5 395v2M514 395.5h2M517.5 395v3M566.5 395v3M516 396.5h1M96 397.5h1M98.5 397v2M132.5 397v2M466.5 397v2M500.5 397v2M518 397.5h2M33.5 398v2M82.5 398v2M94 398.5h2M516.5 398v2M520 398.5h2M565.5 398v2M92 399.5h2M99.5 399v2M133 399.5h1M465 399.5h1M499.5 399v2M522 399.5h2M34.5 400v2M83.5 400v2M90 400.5h2M134.5 400v2M464.5 400v2M515.5 400v2M524 400.5h2M564.5 400v2M88 401.5h2M100.5 401v2M498.5 401v2M526 401.5h2M35.5 402v2M84.5 402v2M86 402.5h2M463 402.5h1M514.5 402v2M528 402.5h2M563.5 402v2M85.5 403v3M101.5 403v2M134 403.5h1M136.5 403v2M415 403.5h1M462.5 403v2M497.5 403v2M530 403.5h3M36.5 404v3M132 404.5h2M416 404.5h1M513.5 404v2M533 404.5h2M562.5 404v3M102.5 405v2M130 405.5h2M137.5 405v2M417 405.5h1M461.5 405v2M496.5 405v2M535 405.5h2M86.5 406v2M129 406.5h1M418 406.5h1M512.5 406v2M537 406.5h2M37.5 407v2M103.5 407v2M127 407.5h2M138 407.5h1M419 407.5h2M460 407.5h1M495.5 407v2M539 407.5h2M561.5 407v2M87.5 408v2M126 408.5h1M139.5 408v2M421 408.5h1M459.5 408v2M511.5 408v2M541 408.5h2M38.5 409v2M104.5 409v2M124 409.5h2M422 409.5h1M494.5 409v2M496 409.5h2M543 409.5h3M560.5 409v2M88.5 410v2M122 410.5h2M140 410.5h1M423 410.5h1M458 410.5h1M498 410.5h2M510.5 410v2M546 410.5h2M39.5 411v2M105 411.5h1M121 411.5h1M141.5 411v2M424 411.5h1M457.5 411v2M493 411.5h1M500 411.5h1M548 411.5h2M559.5 411v2M89.5 412v2M106.5 412v3M119 412.5h2M492.5 412v2M501 412.5h2M509.5 412v2M550 412.5h2M40.5 413v3M118 413.5h1M142 413.5h1M456 413.5h1M503 413.5h2M552 413.5h2M558.5 413v3M90.5 414v2M107 414.5h1M116 414.5h2M143 414.5h1M455 414.5h1M491 414.5h1M505 414.5h2M508.5 414v2M554 414.5h2M104 415.5h2M108.5 415v2M114 415.5h2M144.5 415v2M454.5 415v2M490.5 415v2M507.5 415v3M556 415.5h2M41.5 416v2M91.5 416v2M102 416.5h2M113 416.5h1M401 416.5h1M557.5 416v2M100 417.5h2M109 417.5h1M111 417.5h2M145 417.5h1M402 417.5h1M453 417.5h1M489 417.5h1M42.5 418v2M92 418.5h1M99 418.5h1M110.5 418v2M146 418.5h1M403 418.5h1M452 418.5h1M488.5 418v2M506 418.5h1M556.5 418v2M93.5 419v2M97 419.5h2M147 419.5h1M404 419.5h1M451 419.5h1M505.5 419v2M43.5 420v2M95 420.5h2M111.5 420v2M148 420.5h1M405.5 420v2M450 420.5h1M487.5 420v2M555.5 420v2M94.5 421v2M149.5 421v2M449.5 421v2M451 421.5h1M504.5 421v2M44.5 422v3M112.5 422v2M406 422.5h1M452 422.5h1M486.5 422v2M554.5 422v3M95.5 423v2M150 423.5h1M407 423.5h1M448 423.5h1M453 423.5h2M503.5 423v2M113 424.5h1M151 424.5h1M408 424.5h1M447 424.5h1M455 424.5h1M485.5 424v2M45.5 425v2M96 425.5h1M114 425.5h1M152 425.5h1M409 425.5h1M446 425.5h1M456 425.5h1M484 425.5h1M502 425.5h1M553.5 425v2M97.5 426v2M115 426.5h1M153.5 426v2M445.5 426v2M457 426.5h1M483 426.5h1M486 426.5h2M501.5 426v2M46.5 427v2M116.5 427v2M458 427.5h1M482.5 427v2M488 427.5h1M552.5 427v2M98 428.5h1M154 428.5h1M444 428.5h1M459 428.5h2M489 428.5h1M500 428.5h1M47.5 429v2M99 429.5h1M117.5 429v2M155 429.5h1M443 429.5h1M461 429.5h1M481 429.5h1M490 429.5h2M499 429.5h1M551.5 429v2M100.5 430v2M118 430.5h1M156 430.5h1M442 430.5h1M462 430.5h1M480 430.5h1M492 430.5h1M498.5 430v2M48.5 431v2M115 431.5h2M119.5 431v2M157 431.5h1M441 431.5h1M463 431.5h1M479.5 431v2M493 431.5h1M550.5 431v2M101 432.5h1M114 432.5h1M158 432.5h1M440 432.5h1M464 432.5h2M494 432.5h2M497 432.5h1M49.5 433v2M102.5 433v2M113 433.5h1M120 433.5h1M159 433.5h1M439 433.5h1M466 433.5h1M478 433.5h1M496.5 433v2M549.5 433v2M111 434.5h2M121 434.5h1M160 434.5h1M438 434.5h1M467 434.5h1M477 434.5h1M50.5 435v2M103 435.5h1M110 435.5h1M122.5 435v2M161 435.5h1M437 435.5h1M468 435.5h1M476.5 435v2M495 435.5h1M548.5 435v2M104 436.5h1M109 436.5h1M162 436.5h1M436 436.5h1M469 436.5h1M494 436.5h1M51.5 437v2M105.5 437v3M107 437.5h2M123 437.5h1M163 437.5h1M435 437.5h1M470 437.5h2M475 437.5h1M493.5 437v2M547.5 437v2M106.5 438v2M124 438.5h1M164 438.5h1M434 438.5h1M472 438.5h1M474 438.5h1M52.5 439v2M125 439.5h1M165 439.5h1M433 439.5h1M473 439.5h1M492 439.5h1M546.5 439v2M103 440.5h2M107.5 440v2M126.5 440v2M166 440.5h1M432 440.5h1M472.5 440v2M491.5 440v2M53 441.5h1M102 441.5h1M167 441.5h1M431 441.5h1M473 441.5h1M545 441.5h1M54.5 442v2M101 442.5h1M108 442.5h1M127 442.5h1M168 442.5h1M430 442.5h1M471 442.5h1M474 442.5h2M490 442.5h1M544.5 442v2M99 443.5h2M109 443.5h1M128 443.5h1M169 443.5h1M429 443.5h1M470 443.5h1M476 443.5h1M489 443.5h1M55 444.5h1M98 444.5h1M110.5 444v2M129 444.5h1M170 444.5h1M428 444.5h1M469 444.5h1M477 444.5h1M488.5 444v2M543 444.5h1M56.5 445v2M96 445.5h2M130 445.5h1M171 445.5h2M426 445.5h2M468 445.5h1M478 445.5h2M542.5 445v2M95 446.5h1M111 446.5h1M129 446.5h1M131.5 446v2M173 446.5h1M425 446.5h1M467.5 446v2M480 446.5h1M487 446.5h1M57.5 447v2M94 447.5h1M112 447.5h1M128 447.5h1M174 447.5h1M424 447.5h1M481 447.5h1M486 447.5h1M541.5 447v2M92 448.5h2M113 448.5h1M127 448.5h1M132 448.5h1M175 448.5h1M423 448.5h1M466 448.5h1M482 448.5h2M485 448.5h1M58 449.5h1M91 449.5h1M114.5 449v2M126 449.5h1M133 449.5h1M176 449.5h1M421 449.5h2M465 449.5h1M484.5 449v2M540 449.5h1M59.5 450v2M90 450.5h1M124 450.5h2M134 450.5h1M177 450.5h2M420 450.5h1M464 450.5h1M539.5 450v2M88 451.5h2M115 451.5h1M123 451.5h1M135 451.5h1M179 451.5h1M267.5 451v2M419 451.5h1M463 451.5h1M483 451.5h1M60 452.5h1M87 452.5h1M116 452.5h1M122 452.5h1M136 452.5h1M180 452.5h1M418 452.5h1M462 452.5h1M482 452.5h1M538 452.5h1M61.5 453v2M85 453.5h2M117 453.5h1M121 453.5h1M137 453.5h1M181 453.5h1M266.5 453v4M417 453.5h1M461 453.5h1M481 453.5h1M537.5 453v2M84 454.5h1M118 454.5h1M120 454.5h1M138 454.5h1M182 454.5h2M310.5 454v6M415 454.5h2M460.5 454v2M480 454.5h1M62 455.5h1M83 455.5h1M119.5 455v2M139 455.5h1M184 455.5h1M414 455.5h1M459 455.5h1M479.5 455v2M536 455.5h1M63.5 456v2M81 456.5h2M140 456.5h1M185 456.5h1M413 456.5h1M458 456.5h1M461 456.5h1M535.5 456v2M80 457.5h1M120 457.5h1M141 457.5h1M186 457.5h2M265.5 457v4M411 457.5h2M457 457.5h1M462 457.5h1M478 457.5h1M64 458.5h1M78 458.5h2M121 458.5h1M142 458.5h1M188 458.5h1M410 458.5h1M456 458.5h1M463 458.5h1M477 458.5h1M534 458.5h1M65.5 459v2M77 459.5h1M122 459.5h1M143.5 459v2M189 459.5h2M408 459.5h2M455 459.5h1M464 459.5h1M476 459.5h1M533.5 459v2M76 460.5h1M123 460.5h1M144 460.5h1M191 460.5h1M311.5 460v7M407 460.5h1M454 460.5h1M465 460.5h1M475 460.5h1M66 461.5h1M74 461.5h2M124 461.5h1M142 461.5h1M145 461.5h1M192 461.5h2M264.5 461v3M405 461.5h2M453 461.5h1M466 461.5h1M474 461.5h1M532 461.5h1M67.5 462v2M73 462.5h1M125.5 462v2M141 462.5h1M146 462.5h1M194 462.5h2M403 462.5h2M452 462.5h1M467 462.5h1M473.5 462v2M531.5 462v2M72 463.5h1M140 463.5h1M147 463.5h1M196 463.5h1M402 463.5h1M451 463.5h1M468 463.5h1M68.5 464v2M70 464.5h2M126 464.5h1M139 464.5h1M148 464.5h1M197 464.5h2M400 464.5h2M450 464.5h1M469 464.5h1M472 464.5h1M530.5 464v2M69.5 465v2M127 465.5h1M138 465.5h1M149 465.5h1M197 465.5h1M199 465.5h1M399 465.5h1M449 465.5h1M470 465.5h2M128 466.5h1M137 466.5h1M150 466.5h1M196.5 466v2M200 466.5h2M397 466.5h2M448 466.5h1M470 466.5h1M529 466.5h1M70 467.5h1M129 467.5h1M136 467.5h1M151 467.5h1M202 467.5h1M395 467.5h2M446 467.5h2M469 467.5h1M528 467.5h1M71.5 468v2M130 468.5h1M135 468.5h1M152 468.5h2M195 468.5h1M203 468.5h2M393 468.5h2M445 468.5h1M468 468.5h1M527.5 468v2M131 469.5h1M134 469.5h1M154 469.5h1M194.5 469v2M205 469.5h2M391 469.5h2M444 469.5h1M446 469.5h1M467 469.5h1M72 470.5h1M132 470.5h2M155 470.5h1M207 470.5h2M389 470.5h2M443 470.5h1M447 470.5h1M466 470.5h1M526 470.5h1M73 471.5h1M133 471.5h1M156 471.5h1M193.5 471v2M209 471.5h2M387 471.5h2M442 471.5h1M448 471.5h1M465 471.5h1M525 471.5h1M74.5 472v2M134 472.5h1M157.5 472v2M211 472.5h2M385 472.5h2M440 472.5h2M449 472.5h1M464 472.5h1M524.5 472v2M135 473.5h1M158 473.5h2M192 473.5h1M213 473.5h2M383 473.5h2M439 473.5h1M450 473.5h1M462 473.5h2M75 474.5h1M136 474.5h2M156.5 474v2M160 474.5h1M191.5 474v2M215 474.5h2M381 474.5h2M438 474.5h1M451.5 474v2M461 474.5h1M523 474.5h1M76 475.5h1M138 475.5h1M161 475.5h1M217 475.5h2M379 475.5h2M437 475.5h1M460 475.5h1M522 475.5h1M77 476.5h1M139 476.5h1M155 476.5h1M162 476.5h2M190 476.5h1M219 476.5h3M377 476.5h2M435 476.5h2M452 476.5h1M459 476.5h1M521 476.5h1M78 477.5h1M140 477.5h1M154 477.5h1M164 477.5h1M189.5 477v2M222 477.5h2M375 477.5h2M434 477.5h1M453 477.5h1M458 477.5h1M520 477.5h1M79 478.5h1M141 478.5h1M153.5 478v2M165 478.5h1M224 478.5h2M373 478.5h2M433 478.5h1M454 478.5h1M457 478.5h1M519 478.5h1M80 479.5h1M142 479.5h2M166 479.5h2M188.5 479v2M226 479.5h3M370 479.5h3M431 479.5h2M455 479.5h2M518 479.5h1M81 480.5h1M144 480.5h1M152 480.5h1M168 480.5h1M229 480.5h3M367 480.5h3M430.5 480v2M454 480.5h1M517 480.5h1M82 481.5h1M145 481.5h1M151 481.5h1M169 481.5h1M187 481.5h1M232 481.5h3M364 481.5h3M429 481.5h1M453 481.5h1M516 481.5h1M83 482.5h1M146 482.5h1M150.5 482v2M170 482.5h1M186.5 482v2M235 482.5h3M361 482.5h3M427 482.5h2M431.5 482v2M452 482.5h1M515 482.5h1M84.5 483v2M147 483.5h1M171 483.5h2M238 483.5h3M358 483.5h3M362.5 483v2M426 483.5h1M451 483.5h1M514.5 483v2M148 484.5h2M173.5 484v2M185 484.5h1M241 484.5h4M354 484.5h4M425 484.5h1M432 484.5h1M449 484.5h2M85 485.5h1M149 485.5h2M174 485.5h1M184.5 485v2M245 485.5h3M351 485.5h3M363.5 485v3M424 485.5h1M433 485.5h1M448 485.5h1M513 485.5h1M86 486.5h1M151 486.5h1M172.5 486v2M175 486.5h2M248 486.5h3M348 486.5h3M422 486.5h2M434.5 486v2M447 486.5h1M512 486.5h1M87.5 487v2M152 487.5h1M177 487.5h2M183.5 487v2M251 487.5h3M345 487.5h3M420 487.5h2M446 487.5h1M511.5 487v2M153 488.5h2M171 488.5h1M179 488.5h2M254 488.5h4M341 488.5h4M364.5 488v2M418 488.5h2M435 488.5h1M444 488.5h2M88 489.5h1M155 489.5h1M170 489.5h1M181 489.5h2M258 489.5h5M336 489.5h5M417 489.5h1M436 489.5h1M443 489.5h1M510 489.5h1M89 490.5h1M156 490.5h1M169.5 490v2M182 490.5h2M263 490.5h6M329 490.5h7M365.5 490v3M415 490.5h2M437.5 490v2M442 490.5h1M509 490.5h1M90 491.5h1M157 491.5h2M184 491.5h1M269 491.5h7M323 491.5h6M414.5 491v2M440 491.5h2M508 491.5h1M91 492.5h1M159 492.5h1M168 492.5h1M185 492.5h2M275 492.5h8M316 492.5h7M412 492.5h2M438 492.5h2M507 492.5h1M92 493.5h1M160 493.5h2M167 493.5h1M187 493.5h1M275.5 493v3M283 493.5h33M366.5 493v3M411 493.5h1M415.5 493v2M437 493.5h3M506 493.5h1M93 494.5h1M162 494.5h1M166.5 494v2M188 494.5h2M409 494.5h2M436 494.5h1M440.5 494v2M505 494.5h1M94 495.5h1M163 495.5h1M190 495.5h2M407 495.5h2M416.5 495v2M435 495.5h1M504 495.5h1M95 496.5h1M164 496.5h2M189.5 496v2M192 496.5h2M274.5 496v7M367.5 496v2M405 496.5h2M433 496.5h2M441 496.5h1M503 496.5h1M96 497.5h1M166 497.5h1M194 497.5h2M403 497.5h2M417 497.5h1M432 497.5h1M442 497.5h1M502 497.5h1M97 498.5h1M167 498.5h2M188.5 498v2M196 498.5h2M368.5 498v3M401 498.5h2M418.5 498v2M430 498.5h2M443.5 498v2M501 498.5h1M98 499.5h1M169 499.5h1M198 499.5h2M399 499.5h2M429 499.5h1M500 499.5h1M99 500.5h1M170 500.5h1M187 500.5h1M200 500.5h2M397.5 500v3M398 500.5h1M419.5 500v2M428 500.5h1M444 500.5h1M499 500.5h1M100 501.5h1M171 501.5h2M186.5 501v2M202 501.5h2M369.5 501v3M395 501.5h2M426 501.5h2M445 501.5h1M498 501.5h1M101 502.5h1M173 502.5h1M204 502.5h2M393 502.5h2M420.5 502v2M425 502.5h1M446.5 502v2M497 502.5h1M102 503.5h1M174 503.5h2M185.5 503v2M206 503.5h2M273.5 503v8M391 503.5h2M398.5 503v2M423 503.5h2M496 503.5h1M103 504.5h1M176 504.5h2M207 504.5h3M370.5 504v2M389 504.5h2M421 504.5h2M447 504.5h1M495 504.5h1M104 505.5h1M178 505.5h2M184.5 505v2M207 505.5h1M210 505.5h2M387 505.5h2M399.5 505v2M419 505.5h2M448.5 505v2M494 505.5h1M105 506.5h1M180 506.5h1M206.5 506v2M212 506.5h2M371.5 506v3M385 506.5h2M418 506.5h1M493 506.5h1M106 507.5h1M181 507.5h3M214 507.5h3M381 507.5h4M400.5 507v2M416 507.5h2M449 507.5h1M492 507.5h1M107 508.5h1M183 508.5h2M205.5 508v3M217 508.5h4M377 508.5h4M414 508.5h2M450 508.5h1M491 508.5h1M108 509.5h1M185 509.5h2M221 509.5h4M372.5 509v2M374 509.5h3M379.5 509v2M401.5 509v2M412 509.5h2M451.5 509v2M490 509.5h1M109 510.5h1M187 510.5h1M225 510.5h2M373 510.5h1M410 510.5h2M489 510.5h1M110 511.5h1M188 511.5h2M204.5 511v3M226 511.5h3M272.5 511v7M370 511.5h2M380.5 511v3M402.5 511v2M408 511.5h2M452 511.5h1M487 511.5h2M111 512.5h2M190 512.5h2M226 512.5h1M229 512.5h3M366 512.5h4M406 512.5h2M453.5 512v2M486 512.5h1M113 513.5h1M192 513.5h2M225.5 513v2M232 513.5h4M362 513.5h4M403 513.5h3M485 513.5h1M114 514.5h1M194 514.5h3M203.5 514v2M236 514.5h4M359 514.5h3M381.5 514v4M402 514.5h2M454 514.5h1M483 514.5h2M115 515.5h2M197 515.5h2M224.5 515v3M240 515.5h4M355 515.5h4M360.5 515v2M400 515.5h2M455 515.5h1M482 515.5h1M117 516.5h1M199 516.5h2M202.5 516v2M244.5 516v4M245 516.5h2M351 516.5h4M398 516.5h2M456.5 516v2M481 516.5h1M118 517.5h1M201.5 517v3M247 517.5h4M347 517.5h4M361.5 517v3M395 517.5h3M480 517.5h1M119 518.5h1M203 518.5h2M223.5 518v3M251 518.5h4M271.5 518v4M343 518.5h4M382.5 518v3M393 518.5h2M457 518.5h1M479 518.5h1M120 519.5h1M205 519.5h2M255 519.5h4M339 519.5h4M391 519.5h2M458 519.5h1M478 519.5h1M121 520.5h1M200.5 520v2M207 520.5h2M243.5 520v4M259 520.5h6M334 520.5h5M341.5 520v4M362.5 520v4M389 520.5h2M459.5 520v2M477 520.5h1M122 521.5h1M209 521.5h3M222.5 521v2M264 521.5h7M326 521.5h8M383.5 521v3M387 521.5h2M476 521.5h1M123 522.5h1M199.5 522v2M212 522.5h2M264.5 522v2M272 522.5h16M310 522.5h16M384 522.5h3M460 522.5h1M475 522.5h1M124 523.5h1M214 523.5h3M221.5 523v3M283.5 523v7M288 523.5h22M321.5 523v4M382 523.5h1M461.5 523v2M474 523.5h1M125 524.5h1M198.5 524v2M217 524.5h3M242.5 524v4M263.5 524v4M302.5 524v15M342.5 524v6M363.5 524v3M379 524.5h3M472 524.5h2M126 525.5h2M220 525.5h1M222 525.5h2M375 525.5h4M462 525.5h1M471 525.5h1M128 526.5h1M197.5 526v2M224 526.5h3M372 526.5h3M463 526.5h1M470 526.5h1M129 527.5h1M227 527.5h2M322.5 527v6M364.5 527v3M369 527.5h3M464.5 527v2M468 527.5h2M130 528.5h2M196.5 528v2M229 528.5h3M241.5 528v4M262.5 528v4M367 528.5h2M467 528.5h1M132 529.5h1M232 529.5h4M363 529.5h1M365 529.5h2M465 529.5h2M133 530.5h2M195.5 530v3M236 530.5h4M282.5 530v8M343.5 530v5M359 530.5h4M464 530.5h2M135 531.5h1M240 531.5h1M242 531.5h2M354 531.5h5M462 531.5h2M136 532.5h2M244 532.5h4M261.5 532v4M350 532.5h4M461 532.5h1M138 533.5h2M194.5 533v2M248 533.5h6M323.5 533v11M344 533.5h6M459 533.5h2M140 534.5h1M254 534.5h6M338 534.5h5M458 534.5h1M141 535.5h2M193.5 535v2M260 535.5h1M262 535.5h2M334 535.5h4M456 535.5h2M143 536.5h1M264 536.5h6M328 536.5h6M455 536.5h1M144 537.5h2M192.5 537v2M270 537.5h12M283 537.5h4M311 537.5h12M324 537.5h4M453 537.5h2M146 538.5h1M287 538.5h15M303 538.5h8M452 538.5h1M147 539.5h2M191.5 539v2M450 539.5h2M149 540.5h1M449 540.5h1M150 541.5h2M190.5 541v2M447 541.5h2M152 542.5h1M445 542.5h2M153 543.5h2M189.5 543v3M444 543.5h1M155 544.5h2M324.5 544v11M442 544.5h2M157 545.5h1M441 545.5h1M158 546.5h2M188.5 546v2M439 546.5h2M160 547.5h2M437 547.5h2M162 548.5h2M187.5 548v2M435 548.5h2M164 549.5h2M433 549.5h2M166 550.5h2M186.5 550v2M431 550.5h2M168 551.5h2M429 551.5h2M170 552.5h2M185.5 552v2M427 552.5h2M172 553.5h2M425 553.5h2M174 554.5h3M184.5 554v2M422 554.5h3M177 555.5h2M325.5 555v10M420 555.5h2M179 556.5h2M183.5 556v3M418 556.5h2M181 557.5h2M416 557.5h2M184 558.5h2M413 558.5h3M186 559.5h2M411 559.5h2M188 560.5h2M409 560.5h2M190 561.5h2M407 561.5h2M192 562.5h3M404 562.5h3M195 563.5h2M402 563.5h2M197 564.5h2M400 564.5h2M199 565.5h2M326.5 565v11M398 565.5h2M201 566.5h3M395 566.5h3M204 567.5h3M391 567.5h4M207 568.5h4M388 568.5h3M211 569.5h3M385 569.5h3M214 570.5h3M382 570.5h3M217 571.5h3M379 571.5h3M220 572.5h3M376 572.5h3M223 573.5h3M372 573.5h4M226 574.5h4M369 574.5h3M230 575.5h4M365 575.5h4M234 576.5h4M327.5 576v6M361 576.5h4M238 577.5h5M356 577.5h5M243 578.5h5M351 578.5h5M248 579.5h7M343 579.5h8M255 580.5h10M333 580.5h10M265 581.5h10M323 581.5h4M328 581.5h5M275 582.5h10M313 582.5h10M285 583.5h28"/>
</g>
<g class="h">
<text transform="translate(98.50 361.50) scale(0.72 1)" fill="#ff0000">1</text>
<text transform="translate(152.50 452.50) scale(0.72 1)" fill="#ffff00">2</text>
<text transform="translate(229.50 501.50) scale(0.72 1)" fill="#00ff00">3</text>
<text transform="translate(320.50 512.50) scale(0.72 1)" fill="#0000ff">4</text>
<text transform="translate(420.50 474.50) scale(0.72 1)" fill="#ff0000">5</text>
<text transform="translate(497.50 372.50) scale(0.72 1)" fill="#ffff00">6</text>
<text transform="translate(500.50 245.50) scale(0.72 1)" fill="#00ff00">7</text>
<text transform="translate(446.50 154.50) scale(0.72 1)" fill="#0000ff">8</text>
<text transform="translate(369.50 105.50) scale(0.72 1)" fill="#ff0000">9</text>
<text transform="translate(278.50 94.50) scale(0.72 1)" fill="#ffff00"><tspan x="-5.6">1</tspan><tspan x="5.6">0</tspan></text>
<text transform="translate(178.50 132.50) scale(0.72 1)" fill="#00ff00"><tspan x="-5.6">1</tspan><tspan x="5.6">1</tspan></text>
<text transform="translate(101.50 234.50) scale(0.72 1)" fill="#0000ff"><tspan x="-5.6">1</tspan><tspan x="5.6">2</tspan></text>
</g>
<text class="g" transform="translate(119.50 307.50) scale(0.330 1)" fill="#ff0000"><tspan x="-18.2">A</tspan><tspan x="1.5" style="font-size:21px">s</tspan><tspan x="19.7" style="font-size:21px">c</tspan></text>
<text class="g" transform="translate(321.50 129.50) scale(0.420 1)" fill="#ffff00"><tspan x="-9.5">M</tspan><tspan x="13.6">C</tspan></text>
</svg>
<div id="side" style="position:absolute;left:0;top:0;width:760px;height:600px;will-change:transform">
<pre class="t" style="top:7px"><span style="color:#ffffff">Astrolog 5.40</span></pre>
<pre class="t" style="top:17px"><span style="color:#bfbfbf">"Anonymous"</span></pre>
<pre class="t" style="top:27px"><span style="color:#bfbfbf">Sun September 21, 2003</span></pre>
<pre class="t" style="top:37px"><span style="color:#bfbfbf"> 7:07pm (ST +8:00 GMT)</span></pre>
<pre class="t" style="top:47px"><span style="color:#bfbfbf">"Taipei"</span></pre>
<pre class="t" style="top:57px"><span style="color:#bfbfbf">121°36E 23°29N</span></pre>
<pre class="t" style="top:67px"><span style="color:#bfbfbf">Placidus houses.</span></pre>
<pre class="t" style="top:77px"><span style="color:#bfbfbf">Tropical, Geocentric.</span></pre>
<pre class="t" style="top:87px"><span style="color:#bfbfbf">Julian Day = 2452903.9632</span></pre>
<pre class="t" style="top:107px"><span style="color:#ff0000"> 1st house: 24Ari10</span></pre>
<pre class="t" style="top:117px"><span style="color:#ffff00"> 2nd house: 26Tau26</span></pre>
<pre class="t" style="top:127px"><span style="color:#00ff00"> 3rd house: 22Gem31</span></pre>
<pre class="t" style="top:137px"><span style="color:#0000ff"> 4th house: 16Can51</span></pre>
<pre class="t" style="top:147px"><span style="color:#ff0000"> 5th house: 13Leo17</span></pre>
<pre class="t" style="top:157px"><span style="color:#ffff00"> 6th house: 15Vir27</span></pre>
<pre class="t" style="top:167px"><span style="color:#00ff00"> 7th house: 24Lib10</span></pre>
<pre class="t" style="top:177px"><span style="color:#0000ff"> 8th house: 26Sco26</span></pre>
<pre class="t" style="top:187px"><span style="color:#ff0000"> 9th house: 22Sag31</span></pre>
<pre class="t" style="top:197px"><span style="color:#ffff00">10th house: 16Cap51</span></pre>
<pre class="t" style="top:207px"><span style="color:#00ff00">11th house: 13Aqu17</span></pre>
<pre class="t" style="top:217px"><span style="color:#0000ff">12th house: 15Pis27</span></pre>
<pre class="t" style="top:237px"><span style="color:#ff0000"> Sun: </span><span style="color:#ffff00">28Vir04</span><span style="color:#ffffff"> </span><span style="color:#bfbfbf"> - 0°00'</span></pre>
<pre class="t" style="top:247px"><span style="color:#0000ff">Moon: </span><span style="color:#0000ff">28Can26</span><span style="color:#ffffff"> </span><span style="color:#bfbfbf"> + 4°41'</span></pre>
<pre class="t" style="top:257px"><span style="color:#00ff00">Merc: </span><span style="color:#ffff00">12Vir18</span><span style="color:#ffffff"> </span><span style="color:#bfbfbf"> - 0°20'</span></pre>
<pre class="t" style="top:267px"><span style="color:#00ff00">Venu: </span><span style="color:#00ff00"> 7Lib13</span><span style="color:#ffffff"> </span><span style="color:#bfbfbf"> + 1°12'</span></pre>
<pre class="t" style="top:277px"><span style="color:#ff0000">Mars: </span><span style="color:#0000ff"> 0Pis21</span><span style="color:#ffffff">R</span><span style="color:#bfbfbf"> - 5°19'</span></pre>
<pre class="t" style="top:287px"><span style="color:#ff0000">Jupi: </span><span style="color:#ffff00"> 5Vir23</span><span style="color:#ffffff"> </span><span style="color:#bfbfbf"> + 0°52'</span></pre>
<pre class="t" style="top:297px"><span style="color:#ffff00">Satu: </span><span style="color:#0000ff">12Can09</span><span style="color:#ffffff"> </span><span style="color:#bfbfbf"> - 0°44'</span></pre>
<pre class="t" style="top:307px"><span style="color:#00ff00">Uran: </span><span style="color:#00ff00">29Aqu47</span><span style="color:#ffffff">R</span><span style="color:#bfbfbf"> - 0°47'</span></pre>
<pre class="t" style="top:317px"><span style="color:#0000ff">Nept: </span><span style="color:#00ff00">10Aqu40</span><span style="color:#ffffff">R</span><span style="color:#bfbfbf"> - 0°01'</span></pre>
<pre class="t" style="top:327px"><span style="color:#0000ff">Plut: </span><span style="color:#ff0000">17Sag24</span><span style="color:#ffffff"> </span><span style="color:#bfbfbf"> + 9°00'</span></pre>
<pre class="t" style="top:337px"><span style="color:#007f7f">Node: </span><span style="color:#ffff00">23Tau05</span><span style="color:#ffffff">R</span><span style="color:#bfbfbf"> + 0°00'</span></pre>
<pre class="t" style="top:357px"><span style="color:#bfbfbf">Fire: 2, Earth: 5,</span></pre>
<pre class="t" style="top:367px"><span style="color:#bfbfbf">Air : 3, Water: 3</span></pre>
<pre class="t" style="top:377px"><span style="color:#bfbfbf">Car: 5, Fix: 3, Mut: 5</span></pre>
<pre class="t" style="top:387px"><span style="color:#bfbfbf">Yang: 5, Yin: 8</span></pre>
<pre class="t" style="top:397px"><span style="color:#bfbfbf">M: 4, N: 7, A: 5, D: 6</span></pre>
<pre class="t" style="top:407px"><span style="color:#bfbfbf">Ang: 3, Suc: 5, Cad: 3</span></pre>
<pre class="t" style="top:417px"><span style="color:#bfbfbf">Learn: 7, Share: 6</span></pre>
</div>
</body></html>
